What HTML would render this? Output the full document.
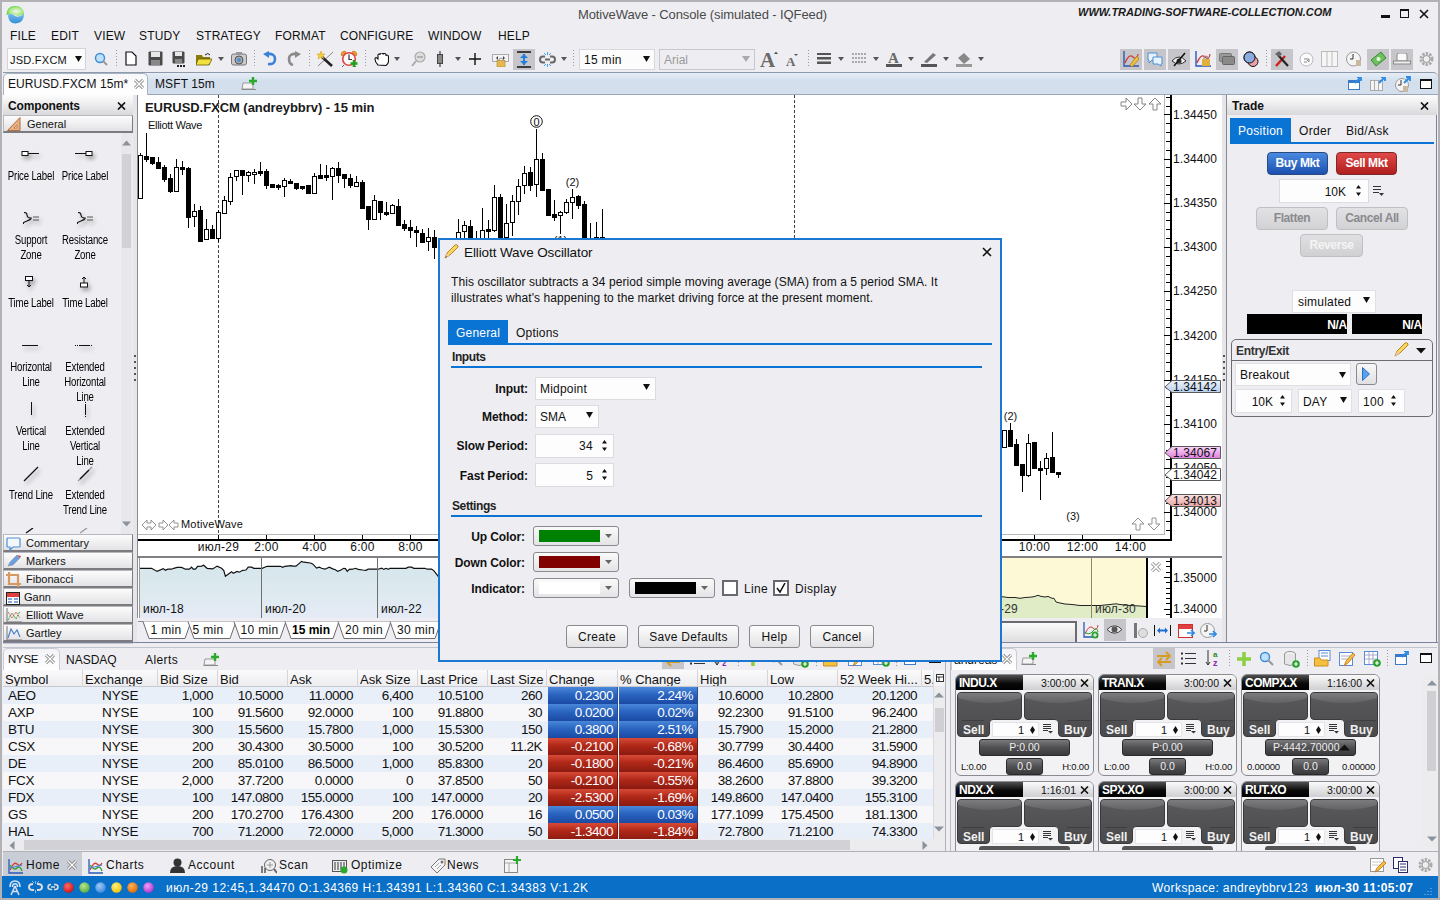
<!DOCTYPE html>
<html><head><meta charset="utf-8"><style>
html,body{margin:0;padding:0}
body{width:1440px;height:900px;overflow:hidden;background:#eeeef2;position:relative;font-family:"Liberation Sans",sans-serif}
.a{position:absolute}
.t{position:absolute;white-space:nowrap;line-height:1;font-family:"Liberation Sans",sans-serif}
</style></head><body>
<div class="a" style="left:7px;top:48px;width:79px;height:22px;background:#fbfbfb;border:1px solid #d4d4d8;box-sizing:border-box"></div>
<div class="t" style="left:10px;top:55px;font-size:11px;color:#111;letter-spacing:0.25px">JSD.FXCM</div>
<svg class="a" style="left:75px;top:56px;" width="7" height="6" viewBox="0 0 7 6"><path d="M0 0H7L3.5 6Z" fill="#111"/></svg>
<svg class="a" style="left:94px;top:52px;" width="14" height="14" viewBox="0 0 14 14"><circle cx="6" cy="6" r="4.5" fill="#bfe0fa" stroke="#3b8ad8" stroke-width="1.4"/><path d="M9 9L13 13" stroke="#999" stroke-width="2"/></svg>
<div class="a" style="left:116px;top:50px;width:1px;height:18px;background:repeating-linear-gradient(#9a9a9a 0 1px,transparent 1px 3px)"></div>
<svg class="a" style="left:125px;top:51px;" width="12" height="15" viewBox="0 0 12 15"><path d="M1 1H7L11 5V14H1Z" fill="#fff" stroke="#111" stroke-width="1.2"/></svg>
<svg class="a" style="left:148px;top:51px;" width="15" height="15" viewBox="0 0 15 15"><rect x="0.5" y="0.5" width="14" height="14" rx="1" fill="#4a4a4a"/><rect x="3" y="1" width="9" height="5" fill="#e8e8e8"/><rect x="3" y="9" width="9" height="5" fill="#888"/></svg>
<svg class="a" style="left:172px;top:51px;" width="15" height="17" viewBox="0 0 15 17"><rect x="0.5" y="0.5" width="12" height="12" rx="1" fill="#4a4a4a"/><rect x="3" y="1" width="7" height="4" fill="#e8e8e8"/><rect x="3" y="8" width="7" height="4" fill="#888"/><rect x="5" y="14" width="2" height="2" fill="#222"/><rect x="8" y="14" width="2" height="2" fill="#222"/><rect x="11" y="14" width="2" height="2" fill="#222"/></svg>
<svg class="a" style="left:196px;top:52px;" width="16" height="14" viewBox="0 0 16 14"><path d="M0 3H6L7 5H14V13H0Z" fill="#8a7a10"/><path d="M2 7H16L13 13H0Z" fill="#f0e040" stroke="#6a5a00" stroke-width=".8"/><path d="M9 3Q12 0 14 3" stroke="#222" fill="none"/></svg>
<svg class="a" style="left:218px;top:57px;" width="6" height="4" viewBox="0 0 6 4"><path d="M0 0H6L3 4Z" fill="#555"/></svg>
<svg class="a" style="left:231px;top:51px;" width="16" height="16" viewBox="0 0 16 16"><rect x="0.5" y="3" width="15" height="11" rx="2" fill="#ccc" stroke="#777"/><rect x="5" y="1" width="6" height="3" fill="#999"/><circle cx="8" cy="9" r="4" fill="#aaa" stroke="#555"/><circle cx="8" cy="9" r="2" fill="#4a90d9"/></svg>
<div class="a" style="left:254px;top:50px;width:1px;height:18px;background:repeating-linear-gradient(#9a9a9a 0 1px,transparent 1px 3px)"></div>
<svg class="a" style="left:263px;top:51px;" width="14" height="15" viewBox="0 0 14 15"><path d="M4 3Q12 2 12 8Q12 14 5 13" stroke="#3b7fd8" stroke-width="2.6" fill="none"/><path d="M0 3L6 0V7Z" fill="#3b7fd8"/></svg>
<svg class="a" style="left:287px;top:51px;" width="14" height="15" viewBox="0 0 14 15"><path d="M10 3Q2 2 2 8Q2 13 6 14" stroke="#8a8a8a" stroke-width="2.6" fill="none"/><path d="M14 3L8 0V7Z" fill="#8a8a8a"/></svg>
<div class="a" style="left:309px;top:50px;width:1px;height:18px;background:repeating-linear-gradient(#9a9a9a 0 1px,transparent 1px 3px)"></div>
<svg class="a" style="left:316px;top:50px;" width="18" height="18" viewBox="0 0 18 18"><path d="M2 16L17 2" stroke="#888" stroke-width="1"/><path d="M6 7L16 16" stroke="#222" stroke-width="2.6"/><path d="M5 1L6 4L9 4L6.5 6L8 9L5 7L2 9L3 6L1 4L4 4Z" fill="#f8d030" stroke="#d09010" stroke-width=".5"/></svg>
<svg class="a" style="left:340px;top:50px;" width="18" height="17" viewBox="0 0 18 17"><path d="M1 5Q1 1 5 1L6 2L2 6Z M17 5Q17 1 13 1L12 2L16 6Z" fill="#f0a030" stroke="#c07010" stroke-width=".6"/><circle cx="9" cy="9" r="6.3" fill="#fafafa" stroke="#e04040" stroke-width="1.6"/><path d="M9 4.5V9.5H12" stroke="#333" stroke-width="1.2" fill="none"/><path d="M4 15L2 17M14 15L16 17" stroke="#666"/><path d="M14 10V17M10.5 13.5H17.5" stroke="#20a020" stroke-width="2.6"/></svg>
<div class="a" style="left:365px;top:50px;width:1px;height:18px;background:repeating-linear-gradient(#9a9a9a 0 1px,transparent 1px 3px)"></div>
<svg class="a" style="left:374px;top:53px;" width="15" height="13" viewBox="0 0 15 13"><path d="M4 12Q1 9 1 6Q1 4 3 5L4 6V2Q4 1 5 1Q6 1 6 2V1Q6 0 7.5 0Q9 0 9 1V1.5Q9 0.5 10.5 0.5Q12 0.5 12 2V3Q12 2 13 2Q14.5 2 14.5 4V8Q14.5 11 12 12.5Z" fill="#fff" stroke="#111" stroke-width="1.1"/></svg>
<svg class="a" style="left:394px;top:57px;" width="6" height="4" viewBox="0 0 6 4"><path d="M0 0H6L3 4Z" fill="#555"/></svg>
<svg class="a" style="left:411px;top:51px;" width="16" height="16" viewBox="0 0 16 16"><circle cx="9" cy="6" r="5" fill="#ddd" stroke="#aaa" stroke-width="1.2"/><path d="M6 6H12" stroke="#888"/><path d="M5 10L1 15" stroke="#aaa" stroke-width="2"/></svg>
<svg class="a" style="left:436px;top:51px;" width="8" height="16" viewBox="0 0 8 16"><path d="M4 0V16" stroke="#444" stroke-width="1.2"/><rect x="1.5" y="3.5" width="5" height="9" fill="#888" stroke="#444"/></svg>
<svg class="a" style="left:455px;top:57px;" width="6" height="4" viewBox="0 0 6 4"><path d="M0 0H6L3 4Z" fill="#555"/></svg>
<svg class="a" style="left:469px;top:53px;" width="12" height="12" viewBox="0 0 12 12"><path d="M6 0V12M0 6H12" stroke="#111" stroke-width="1.4"/></svg>
<svg class="a" style="left:492px;top:54px;" width="17" height="13" viewBox="0 0 17 13"><rect x="0.5" y="0.5" width="16" height="7" fill="#f4f4f4" stroke="#aaa"/><path d="M4 4L6 2V6Z M13 4L11 2V6Z" fill="#444"/><rect x="5" y="6.5" width="8" height="6.5" fill="#e8b850" stroke="#b08020" stroke-width=".6"/><path d="M7 7V5Q9 3 11 5V7" stroke="#999" fill="none"/></svg>
<div class="a" style="left:513px;top:49px;width:22px;height:21px;background:#c6c6ca"></div>
<svg class="a" style="left:517px;top:51px;" width="14" height="17" viewBox="0 0 14 17"><path d="M0 1H14M0 16H14" stroke="#111" stroke-width="1.4"/><path d="M7 3V14" stroke="#1e7fe0" stroke-width="2"/><path d="M3 7L7 3L11 7Z M3 10L7 14L11 10Z" fill="#1e7fe0"/></svg>
<svg class="a" style="left:539px;top:52px;" width="17" height="15" viewBox="0 0 17 15"><path d="M6 4.5H4Q1 4.5 1 7.5Q1 10.5 4 10.5H6M11 4.5H13Q16 4.5 16 7.5Q16 10.5 13 10.5H11M6 7.5H11" stroke="#666" stroke-width="2" fill="none"/><path d="M8.5 0V3M8.5 12V15M5 1L7 3M12 1L10 3M5 14L7 12M12 14L10 12" stroke="#4aa0f0"/></svg>
<svg class="a" style="left:561px;top:57px;" width="6" height="4" viewBox="0 0 6 4"><path d="M0 0H6L3 4Z" fill="#555"/></svg>
<div class="a" style="left:573px;top:50px;width:1px;height:18px;background:repeating-linear-gradient(#9a9a9a 0 1px,transparent 1px 3px)"></div>
<div class="a" style="left:579px;top:49px;width:76px;height:21px;background:#fcfcfc;border:1px solid #d8d8dc;box-sizing:border-box"></div>
<div class="t" style="left:584px;top:54px;font-size:12px;color:#111;letter-spacing:0.3px">15 min</div>
<svg class="a" style="left:643px;top:56px;" width="7" height="6" viewBox="0 0 7 6"><path d="M0 0H7L3.5 6Z" fill="#111"/></svg>
<div class="a" style="left:659px;top:49px;width:96px;height:21px;background:#eeeef2;border:1px solid #c8c8cc;box-sizing:border-box"></div>
<div class="t" style="left:664px;top:54px;font-size:12px;color:#9a9a9a;">Arial</div>
<svg class="a" style="left:742px;top:56px;" width="8" height="6" viewBox="0 0 8 6"><path d="M0 0H8L4 6Z" fill="#aaa"/></svg>
<svg class="a" style="left:760px;top:50px;" width="19" height="18" viewBox="0 0 19 18"><text x="0" y="17" font-family="Liberation Serif" font-weight="bold" font-size="21" fill="#6a6a6a">A</text><path d="M14 4L16 1.5L18 4Z" fill="#555"/></svg>
<svg class="a" style="left:786px;top:53px;" width="13" height="14" viewBox="0 0 13 14"><text x="0" y="13" font-family="Liberation Serif" font-weight="bold" font-size="13" fill="#6a6a6a">A</text><path d="M8 1H12L10 3Z" fill="#555"/></svg>
<div class="a" style="left:808px;top:50px;width:1px;height:18px;background:repeating-linear-gradient(#9a9a9a 0 1px,transparent 1px 3px)"></div>
<svg class="a" style="left:817px;top:53px;" width="15" height="11" viewBox="0 0 15 11"><rect y="0" width="14" height="2" fill="#555"/><rect y="4" width="14" height="2.5" fill="#555"/><rect y="8.5" width="14" height="2.5" fill="#555"/></svg>
<svg class="a" style="left:838px;top:57px;" width="6" height="4" viewBox="0 0 6 4"><path d="M0 0H6L3 4Z" fill="#555"/></svg>
<svg class="a" style="left:852px;top:53px;" width="15" height="11" viewBox="0 0 15 11"><path d="M0 1H14M0 5H14M0 9H14" stroke="#666" stroke-dasharray="2 1"/></svg>
<svg class="a" style="left:873px;top:57px;" width="6" height="4" viewBox="0 0 6 4"><path d="M0 0H6L3 4Z" fill="#555"/></svg>
<svg class="a" style="left:886px;top:50px;" width="17" height="17" viewBox="0 0 17 17"><text x="2" y="13" font-family="Liberation Serif" font-weight="bold" font-size="15" fill="#6a6a6a">A</text><rect x="0" y="14" width="16" height="3" fill="#555"/></svg>
<svg class="a" style="left:908px;top:57px;" width="6" height="4" viewBox="0 0 6 4"><path d="M0 0H6L3 4Z" fill="#555"/></svg>
<svg class="a" style="left:921px;top:51px;" width="17" height="16" viewBox="0 0 17 16"><path d="M3 11L12 2L15 4L6 12Z" fill="#777"/><rect x="0" y="13" width="16" height="3" fill="#555"/></svg>
<svg class="a" style="left:943px;top:57px;" width="6" height="4" viewBox="0 0 6 4"><path d="M0 0H6L3 4Z" fill="#555"/></svg>
<svg class="a" style="left:956px;top:51px;" width="17" height="16" viewBox="0 0 17 16"><path d="M2 7L8 2L14 8L8 13Z" fill="#888"/><rect x="0" y="13" width="16" height="3" fill="#999"/></svg>
<svg class="a" style="left:978px;top:57px;" width="6" height="4" viewBox="0 0 6 4"><path d="M0 0H6L3 4Z" fill="#555"/></svg>
<div class="a" style="left:1120px;top:49px;width:22px;height:21px;background:#c6c6ca"></div>
<div class="a" style="left:1144px;top:49px;width:22px;height:21px;background:#c6c6ca"></div>
<div class="a" style="left:1168px;top:49px;width:22px;height:21px;background:#c6c6ca"></div>
<div class="a" style="left:1216px;top:49px;width:22px;height:21px;background:#c6c6ca"></div>
<div class="a" style="left:1271px;top:49px;width:22px;height:21px;background:#c6c6ca"></div>
<div class="a" style="left:1367px;top:49px;width:22px;height:21px;background:#c6c6ca"></div>
<div class="a" style="left:1391px;top:49px;width:22px;height:21px;background:#c6c6ca"></div>
<svg class="a" style="left:1123px;top:51px;" width="16" height="16" viewBox="0 0 16 16"><path d="M1 0V15H16" stroke="#2a5ab8" stroke-width="1.4" fill="none"/><path d="M2 12Q6 2 10 6T15 3" stroke="#d04040" fill="none" stroke-width="1.3"/><path d="M7 14L14 5L16 8L9 16Z" fill="#f0c040" stroke="#b07a10" stroke-width=".8"/></svg>
<svg class="a" style="left:1147px;top:51px;" width="16" height="16" viewBox="0 0 16 16"><path d="M1 2H10V9H5L2 12V9H1Z" fill="#e8f2fc" stroke="#4a90d8"/><path d="M6 6H15V13H14V15L11 13H6Z" fill="#e8f2fc" stroke="#4a90d8"/></svg>
<svg class="a" style="left:1171px;top:51px;" width="16" height="16" viewBox="0 0 16 16"><path d="M1 10Q8 2 15 10Q8 16 1 10Z" fill="#eee" stroke="#333"/><circle cx="8" cy="10" r="2.5" fill="#333"/><path d="M3 15L14 2" stroke="#111" stroke-width="1.5"/></svg>
<svg class="a" style="left:1195px;top:51px;" width="16" height="16" viewBox="0 0 16 16"><path d="M1 0V15H16" stroke="#2a5ab8" stroke-width="1.4" fill="none"/><path d="M2 12Q6 2 10 6T15 3" stroke="#d04040" fill="none" stroke-width="1.3"/><rect x="7" y="8" width="8" height="7" fill="#e0b040"/><path d="M9 8V6Q11 4 13 6V8" stroke="#888" fill="none"/></svg>
<svg class="a" style="left:1219px;top:53px;" width="16" height="12" viewBox="0 0 16 12"><rect x="0.5" y="0.5" width="12" height="8" rx="1" fill="#999" stroke="#777"/><rect x="3.5" y="3.5" width="12" height="8" rx="1" fill="#8a8a8a" stroke="#666"/></svg>
<svg class="a" style="left:1243px;top:51px;" width="16" height="16" viewBox="0 0 16 16"><circle cx="6.5" cy="6.5" r="5.5" fill="#8aaae0" stroke="#111"/><circle cx="10" cy="10.5" r="5" fill="#f0a0a8" stroke="#111"/><circle cx="6.5" cy="6.5" r="5.5" fill="#8aaae0" stroke="#111"/></svg>
<div class="a" style="left:1266px;top:50px;width:1px;height:18px;background:repeating-linear-gradient(#9a9a9a 0 1px,transparent 1px 3px)"></div>
<svg class="a" style="left:1274px;top:51px;" width="16" height="16" viewBox="0 0 16 16"><path d="M2 15L11 5" stroke="#d02020" stroke-width="2.5"/><path d="M14 15L4 4" stroke="#222" stroke-width="2.2"/><path d="M1 3L5 0L8 3L5 6Z" fill="#666"/></svg>
<svg class="a" style="left:1299px;top:52px;" width="15" height="15" viewBox="0 0 15 15"><circle cx="7.5" cy="7.5" r="6.5" fill="#fbfbfb" stroke="#bbb"/><path d="M5 7H10V10M10 10L8 8M5 10H8" stroke="#888" fill="none"/></svg>
<svg class="a" style="left:1321px;top:51px;" width="17" height="16" viewBox="0 0 17 16"><rect x="0.5" y="0.5" width="16" height="15" fill="#f6f6f6" stroke="#bbb"/><path d="M6 1V15M11 1V15" stroke="#bbb"/></svg>
<svg class="a" style="left:1346px;top:51px;" width="17" height="16" viewBox="0 0 17 16"><circle cx="7.5" cy="8" r="7" fill="#f4f4f4" stroke="#999"/><path d="M7 3V8H4" stroke="#333" fill="none"/><path d="M10 9h5v6h-5z" fill="#c8b8a0"/></svg>
<svg class="a" style="left:1370px;top:51px;" width="17" height="16" viewBox="0 0 17 16"><path d="M1 9L11 1L16 7L6 15Z" fill="#6cc060" stroke="#3a8a30"/><circle cx="8.5" cy="8" r="2" fill="#e8f8e0"/></svg>
<svg class="a" style="left:1393px;top:53px;" width="18" height="12" viewBox="0 0 18 12"><path d="M4 8V2Q4 0 6 0H12Q14 0 14 2V8Z" fill="#fafafa" stroke="#888"/><rect x="0.5" y="8" width="17" height="3" fill="#eee" stroke="#888"/></svg>
<svg class="a" style="left:1419px;top:51px;" width="15" height="16" viewBox="0 0 15 16"><circle cx="7.5" cy="8" r="5.5" fill="none" stroke="#aaa" stroke-width="3" stroke-dasharray="2.3 1.2"/><circle cx="7.5" cy="8" r="3.5" fill="#eee" stroke="#999"/></svg>
<div class="a" style="left:3px;top:72px;width:1435px;height:23px;background:linear-gradient(#e6edf6,#d3dfed 40%,#d3dfed);border-top:1px solid #8d9aab;border-bottom:1px solid #9aa6b6;box-sizing:border-box;border-top-right-radius:5px"></div>
<div class="a" style="left:3px;top:73px;width:145px;height:22px;background:linear-gradient(#f8f8fa,#fff);border:1px solid #a9b4c2;border-bottom:none;border-radius:5px 5px 0 0;box-sizing:border-box"></div>
<div class="t" style="left:8px;top:78px;font-size:12px;color:#111;letter-spacing:0.05px">EURUSD.FXCM 15m*</div>
<svg class="a" style="left:134px;top:79px;" width="10" height="10" viewBox="0 0 10 10"><path d="M1 1L9 9M9 1L1 9" stroke="#777" stroke-width="3"/><path d="M1 1L9 9M9 1L1 9" stroke="#fff" stroke-width="1.4"/></svg>
<div class="t" style="left:155px;top:78px;font-size:12px;color:#111;letter-spacing:0.1px">MSFT 15m</div>
<svg class="a" style="left:241px;top:77px;" width="17" height="13" viewBox="0 0 17 13"><path d="M1 12L2 6H12V12Z" fill="#f4f4f4" stroke="#999"/><path d="M0.5 12.5H15" stroke="#888"/><path d="M12 0V8M8 4H16" stroke="#2aaa2a" stroke-width="2.4"/></svg>
<svg class="a" style="left:1348px;top:77px;" width="14" height="13" viewBox="0 0 14 13"><rect x="0.5" y="3.5" width="11" height="9" fill="#fff" stroke="#3a7ac8"/><rect x="0.5" y="3.5" width="11" height="2.5" fill="#3a7ac8"/><path d="M7 6L13 0M9 0H13V4" stroke="#2a8ae8" stroke-width="1.8" fill="none"/></svg>
<svg class="a" style="left:1370px;top:77px;" width="16" height="14" viewBox="0 0 16 14"><rect x="0.5" y="3.5" width="12" height="10" fill="#f4f4f4" stroke="#aaa"/><path d="M4.5 4V13M8.5 4V13" stroke="#aaa"/><path d="M9 6L15 0M11 0H15V4" stroke="#2a8ae8" stroke-width="1.8" fill="none"/></svg>
<svg class="a" style="left:1395px;top:76px;" width="16" height="16" viewBox="0 0 16 16"><circle cx="7" cy="9" r="6.5" fill="#f4f4f4" stroke="#999"/><path d="M6 4V9H3" stroke="#333" fill="none"/><path d="M8 10h5v6h-5z" fill="#c8b8a0"/><path d="M9 7L15 1M11 1H15V5" stroke="#2a8ae8" stroke-width="1.8" fill="none"/></svg>
<div class="a" style="left:1420px;top:79px;width:12px;height:10px;border:1px solid #111;border-top-width:2px;box-sizing:border-box;background:#fff"></div>
<div class="a" style="left:3px;top:95px;width:130px;height:20px;background:linear-gradient(#fdfdfd,#d9d9dc);"></div>
<div class="t" style="left:8px;top:100px;font-size:12px;color:#111;font-weight:bold;letter-spacing:-0.15px">Components</div>
<svg class="a" style="left:117px;top:102px;" width="9" height="8" viewBox="0 0 9 8"><path d="M1 0.5L8 7.5M8 0.5L1 7.5" stroke="#111" stroke-width="1.7"/></svg>
<div class="a" style="left:3px;top:115px;width:130px;height:18px;background:linear-gradient(#fcfcfc,#e3e3e6);border:1px solid #b8b8bc;border-right:1px solid #7c7c80;border-bottom:2px solid #7c7c80;box-sizing:border-box"></div><svg class="a" style="left:7px;top:117px;" width="14" height="14" viewBox="0 0 14 14"><path d="M13 0.5V13.5H0.5Z" fill="#e8b080" stroke="#b07040"/><path d="M10 8V11H7Z" fill="#fbe8d8" stroke="#b07040" stroke-width=".7"/></svg><div class="t" style="left:27px;top:119px;font-size:11px;color:#111;">General</div>
<div class="a" style="left:121px;top:133px;width:11px;height:401px;background:#e8e8ec"></div>
<svg class="a" style="left:122px;top:140px;" width="9" height="6" viewBox="0 0 9 6"><path d="M0 5.5L4.5 0.5L9 5.5Z" fill="#8a929c"/></svg>
<div class="a" style="left:122px;top:154px;width:9px;height:94px;background:#d2d2d6"></div>
<svg class="a" style="left:122px;top:521px;" width="9" height="6" viewBox="0 0 9 6"><path d="M0 0.5L4.5 5.5L9 0.5Z" fill="#8a929c"/></svg>
<div class="t" style="left:-29px;width:120px;text-align:center;top:170px;font-size:12px;transform:scaleX(0.8);transform-origin:60px 0;letter-spacing:-0.2px">Price Label</div>
<div class="t" style="left:25px;width:120px;text-align:center;top:170px;font-size:12px;transform:scaleX(0.8);transform-origin:60px 0;letter-spacing:-0.2px">Price Label</div>
<div class="t" style="left:-29px;width:120px;text-align:center;top:234px;font-size:12px;transform:scaleX(0.8);transform-origin:60px 0;letter-spacing:-0.2px">Support</div>
<div class="t" style="left:-29px;width:120px;text-align:center;top:249px;font-size:12px;transform:scaleX(0.8);transform-origin:60px 0;letter-spacing:-0.2px">Zone</div>
<div class="t" style="left:25px;width:120px;text-align:center;top:234px;font-size:12px;transform:scaleX(0.8);transform-origin:60px 0;letter-spacing:-0.2px">Resistance</div>
<div class="t" style="left:25px;width:120px;text-align:center;top:249px;font-size:12px;transform:scaleX(0.8);transform-origin:60px 0;letter-spacing:-0.2px">Zone</div>
<div class="t" style="left:-29px;width:120px;text-align:center;top:297px;font-size:12px;transform:scaleX(0.8);transform-origin:60px 0;letter-spacing:-0.2px">Time Label</div>
<div class="t" style="left:25px;width:120px;text-align:center;top:297px;font-size:12px;transform:scaleX(0.8);transform-origin:60px 0;letter-spacing:-0.2px">Time Label</div>
<div class="t" style="left:-29px;width:120px;text-align:center;top:361px;font-size:12px;transform:scaleX(0.8);transform-origin:60px 0;letter-spacing:-0.2px">Horizontal</div>
<div class="t" style="left:-29px;width:120px;text-align:center;top:376px;font-size:12px;transform:scaleX(0.8);transform-origin:60px 0;letter-spacing:-0.2px">Line</div>
<div class="t" style="left:25px;width:120px;text-align:center;top:361px;font-size:12px;transform:scaleX(0.8);transform-origin:60px 0;letter-spacing:-0.2px">Extended</div>
<div class="t" style="left:25px;width:120px;text-align:center;top:376px;font-size:12px;transform:scaleX(0.8);transform-origin:60px 0;letter-spacing:-0.2px">Horizontal</div>
<div class="t" style="left:25px;width:120px;text-align:center;top:391px;font-size:12px;transform:scaleX(0.8);transform-origin:60px 0;letter-spacing:-0.2px">Line</div>
<div class="t" style="left:-29px;width:120px;text-align:center;top:425px;font-size:12px;transform:scaleX(0.8);transform-origin:60px 0;letter-spacing:-0.2px">Vertical</div>
<div class="t" style="left:-29px;width:120px;text-align:center;top:440px;font-size:12px;transform:scaleX(0.8);transform-origin:60px 0;letter-spacing:-0.2px">Line</div>
<div class="t" style="left:25px;width:120px;text-align:center;top:425px;font-size:12px;transform:scaleX(0.8);transform-origin:60px 0;letter-spacing:-0.2px">Extended</div>
<div class="t" style="left:25px;width:120px;text-align:center;top:440px;font-size:12px;transform:scaleX(0.8);transform-origin:60px 0;letter-spacing:-0.2px">Vertical</div>
<div class="t" style="left:25px;width:120px;text-align:center;top:455px;font-size:12px;transform:scaleX(0.8);transform-origin:60px 0;letter-spacing:-0.2px">Line</div>
<div class="t" style="left:-29px;width:120px;text-align:center;top:489px;font-size:12px;transform:scaleX(0.8);transform-origin:60px 0;letter-spacing:-0.2px">Trend Line</div>
<div class="t" style="left:25px;width:120px;text-align:center;top:489px;font-size:12px;transform:scaleX(0.8);transform-origin:60px 0;letter-spacing:-0.2px">Extended</div>
<div class="t" style="left:25px;width:120px;text-align:center;top:504px;font-size:12px;transform:scaleX(0.8);transform-origin:60px 0;letter-spacing:-0.2px">Trend Line</div>
<svg class="a" style="left:21px;top:150px;filter:drop-shadow(2px 3px 2px rgba(0,0,0,.35))" width="19" height="8" viewBox="0 0 19 8"><rect x="1" y="1.5" width="6" height="4" fill="#fff" stroke="#111"/><path d="M7 3.5H18" stroke="#111"/></svg>
<svg class="a" style="left:75px;top:150px;filter:drop-shadow(2px 3px 2px rgba(0,0,0,.35))" width="19" height="8" viewBox="0 0 19 8"><rect x="11" y="1.5" width="6" height="4" fill="#fff" stroke="#111"/><path d="M0 3.5H11" stroke="#111"/></svg>
<svg class="a" style="left:23px;top:212px;filter:drop-shadow(2px 3px 2px rgba(0,0,0,.35))" width="19" height="12" viewBox="0 0 19 12"><path d="M1 0.5Q4 0.5 4 3T7 6T4 9T1 11.5" stroke="#111" fill="none" stroke-width="1.1"/><path d="M6 6H9M10 5H16M10 8H16" stroke="#555"/></svg>
<svg class="a" style="left:77px;top:212px;filter:drop-shadow(2px 3px 2px rgba(0,0,0,.35))" width="19" height="12" viewBox="0 0 19 12"><path d="M1 0.5Q4 0.5 4 3T7 6T4 9T1 11.5" stroke="#111" fill="none" stroke-width="1.1"/><path d="M6 6H9M10 5H16M10 8H16" stroke="#555"/></svg>
<svg class="a" style="left:25px;top:276px;filter:drop-shadow(2px 3px 2px rgba(0,0,0,.35))" width="9" height="12" viewBox="0 0 9 12"><rect x="0.5" y="0.5" width="7" height="4" fill="#fff" stroke="#111"/><path d="M4 5V11M2 9L4 11L6 9" stroke="#111" fill="none"/></svg>
<svg class="a" style="left:80px;top:276px;filter:drop-shadow(2px 3px 2px rgba(0,0,0,.35))" width="9" height="12" viewBox="0 0 9 12"><rect x="0.5" y="7" width="7" height="4" fill="#fff" stroke="#111"/><path d="M4 1V7M2 3L4 1L6 3" stroke="#111" fill="none"/></svg>
<svg class="a" style="left:22px;top:344px;filter:drop-shadow(2px 3px 2px rgba(0,0,0,.35))" width="17" height="5" viewBox="0 0 17 5"><path d="M0 1.5H16" stroke="#111"/></svg>
<svg class="a" style="left:75px;top:344px;filter:drop-shadow(2px 3px 2px rgba(0,0,0,.35))" width="19" height="5" viewBox="0 0 19 5"><path d="M0 1.5H18" stroke="#111" stroke-dasharray="1 1"/><path d="M4 1.5H14" stroke="#111"/></svg>
<svg class="a" style="left:30px;top:402px;filter:drop-shadow(2px 3px 2px rgba(0,0,0,.35))" width="4" height="14" viewBox="0 0 4 14"><path d="M1.5 0V13" stroke="#111"/></svg>
<svg class="a" style="left:84px;top:402px;filter:drop-shadow(2px 3px 2px rgba(0,0,0,.35))" width="4" height="16" viewBox="0 0 4 16"><path d="M1.5 0V15" stroke="#111" stroke-dasharray="1 1"/><path d="M1.5 3V12" stroke="#111"/></svg>
<svg class="a" style="left:23px;top:466px;filter:drop-shadow(2px 3px 2px rgba(0,0,0,.35))" width="16" height="16" viewBox="0 0 16 16"><path d="M1 15L15 1" stroke="#111" stroke-width="1.3"/></svg>
<svg class="a" style="left:77px;top:466px;filter:drop-shadow(2px 3px 2px rgba(0,0,0,.35))" width="16" height="16" viewBox="0 0 16 16"><path d="M1 15L15 1" stroke="#999" stroke-width="1.3"/><path d="M3 13L12 4" stroke="#111" stroke-width="1.3"/></svg>
<svg class="a" style="left:25px;top:528px;" width="10" height="6" viewBox="0 0 10 6"><path d="M1 5L8 0" stroke="#111" stroke-width="1.3"/></svg>
<svg class="a" style="left:79px;top:528px;" width="10" height="6" viewBox="0 0 10 6"><path d="M1 5L8 0" stroke="#999" stroke-width="1.3"/></svg>
<div class="a" style="left:3px;top:534px;width:130px;height:18px;background:linear-gradient(#fcfcfc,#e3e3e6);border:1px solid #b8b8bc;border-right:1px solid #7c7c80;border-bottom:2px solid #7c7c80;box-sizing:border-box"></div><svg class="a" style="left:6px;top:537px;" width="15" height="14" viewBox="0 0 15 14"><path d="M2 1H13Q14 1 14 2V9Q14 10 13 10H7L4 13V10H2Q1 10 1 9V2Q1 1 2 1Z" fill="#f4f8fc" stroke="#4a90d8" stroke-width="1.2"/></svg><div class="t" style="left:26px;top:538px;font-size:11px;color:#111;">Commentary</div>
<div class="a" style="left:3px;top:552px;width:130px;height:18px;background:linear-gradient(#fcfcfc,#e3e3e6);border:1px solid #b8b8bc;border-right:1px solid #7c7c80;border-bottom:2px solid #7c7c80;box-sizing:border-box"></div><svg class="a" style="left:7px;top:555px;" width="14" height="12" viewBox="0 0 14 12"><path d="M1 11L3 7L10 0L13 3L6 10Z" fill="#6aa0e0" stroke="#888" stroke-width=".5"/><path d="M10 0L13 3L14 1Z" fill="#e04040"/></svg><div class="t" style="left:26px;top:556px;font-size:11px;color:#111;">Markers</div>
<div class="a" style="left:3px;top:570px;width:130px;height:18px;background:linear-gradient(#fcfcfc,#e3e3e6);border:1px solid #b8b8bc;border-right:1px solid #7c7c80;border-bottom:2px solid #7c7c80;box-sizing:border-box"></div><svg class="a" style="left:6px;top:572px;" width="16" height="15" viewBox="0 0 16 15"><path d="M3 0V12H15M0 3H12V15" stroke="#d89860" stroke-width="2.2" fill="none"/></svg><div class="t" style="left:26px;top:574px;font-size:11px;color:#111;">Fibonacci</div>
<div class="a" style="left:3px;top:588px;width:130px;height:18px;background:linear-gradient(#fcfcfc,#e3e3e6);border:1px solid #b8b8bc;border-right:1px solid #7c7c80;border-bottom:2px solid #7c7c80;box-sizing:border-box"></div><svg class="a" style="left:6px;top:590px;" width="14" height="15" viewBox="0 0 14 15"><rect x="0.5" y="2.5" width="13" height="12" fill="#fff" stroke="#222"/><rect x="1" y="3" width="12" height="4" fill="#e04040"/><path d="M2 9H6M8 9H12M2 12H6M8 12H12" stroke="#5a8ad8" stroke-width="1.5"/></svg><div class="t" style="left:24px;top:592px;font-size:11px;color:#111;">Gann</div>
<div class="a" style="left:3px;top:606px;width:130px;height:18px;background:linear-gradient(#fcfcfc,#e3e3e6);border:1px solid #b8b8bc;border-right:1px solid #7c7c80;border-bottom:2px solid #7c7c80;box-sizing:border-box"></div><svg class="a" style="left:6px;top:608px;" width="16" height="15" viewBox="0 0 16 15"><path d="M1 0V14H16" stroke="#777" fill="none"/><path d="M2 12L6 5L10 11L14 3" stroke="#2aaa2a" fill="none" stroke-dasharray="2 1"/><path d="M2 4L6 10L10 4L14 10" stroke="#e05050" fill="none" stroke-dasharray="2 1"/></svg><div class="t" style="left:26px;top:610px;font-size:11px;color:#111;">Elliott Wave</div>
<div class="a" style="left:3px;top:624px;width:130px;height:18px;background:linear-gradient(#fcfcfc,#e3e3e6);border:1px solid #b8b8bc;border-right:1px solid #7c7c80;border-bottom:2px solid #7c7c80;box-sizing:border-box"></div><svg class="a" style="left:6px;top:626px;" width="16" height="15" viewBox="0 0 16 15"><path d="M1 0V14H16" stroke="#777" fill="none"/><path d="M2 12L5 3L8 8L11 4L14 11" stroke="#4a80c8" fill="none" stroke-width="1.2"/></svg><div class="t" style="left:26px;top:628px;font-size:11px;color:#111;">Gartley</div>
<div class="a" style="left:3px;top:642px;width:130px;height:2px;background:#c8c8cc"></div>
<div class="a" style="left:133px;top:95px;width:4px;height:548px;background:#e6e6ea"></div>
<div class="a" style="left:137px;top:95px;width:1px;height:548px;background:#8a8a90"></div>
<div class="a" style="left:134px;top:355px;width:2px;height:2px;background:#555"></div>
<div class="a" style="left:134px;top:361px;width:2px;height:2px;background:#555"></div>
<div class="a" style="left:134px;top:367px;width:2px;height:2px;background:#555"></div>
<div class="a" style="left:134px;top:373px;width:2px;height:2px;background:#555"></div>
<div class="a" style="left:134px;top:379px;width:2px;height:2px;background:#555"></div>
<svg class="a" style="left:0;top:0" width="1440" height="900" viewBox="0 0 1440 900" shape-rendering="crispEdges">
<rect x="138" y="95" width="1084" height="462" fill="#fff"/>
<path d="M218.5 95V535" stroke="#444" stroke-dasharray="3 2"/>
<path d="M794.5 95V535" stroke="#444" stroke-dasharray="3 2"/>
<path d="M140.5 153V198" stroke="#000"/>
<rect x="138.5" y="155.5" width="4" height="43" fill="#fff" stroke="#000"/>
<path d="M146.5 133V162" stroke="#000"/>
<rect x="144" y="156" width="5" height="4" fill="#000"/>
<path d="M152.5 157V165" stroke="#000"/>
<rect x="150" y="157" width="5" height="7" fill="#000"/>
<path d="M158.5 157V169" stroke="#000"/>
<rect x="156" y="162" width="5" height="7" fill="#000"/>
<path d="M164.5 165V182" stroke="#000"/>
<rect x="162" y="167" width="5" height="13" fill="#000"/>
<path d="M170.5 174V193" stroke="#000"/>
<rect x="168" y="178" width="5" height="14" fill="#000"/>
<path d="M176.5 159V191" stroke="#000"/>
<rect x="174.5" y="167.5" width="4" height="24" fill="#fff" stroke="#000"/>
<path d="M182.5 161V175" stroke="#000"/>
<rect x="180" y="167" width="5" height="3" fill="#000"/>
<path d="M188.5 167V228" stroke="#000"/>
<rect x="186" y="168" width="5" height="50" fill="#000"/>
<path d="M194.5 204V227" stroke="#000"/>
<rect x="192.5" y="211.5" width="4" height="5" fill="#fff" stroke="#000"/>
<path d="M200.5 206V242" stroke="#000"/>
<rect x="198" y="210" width="5" height="32" fill="#000"/>
<path d="M206.5 219V239" stroke="#000"/>
<rect x="204.5" y="229.5" width="4" height="10" fill="#fff" stroke="#000"/>
<path d="M212.5 225V239" stroke="#000"/>
<rect x="210" y="229" width="5" height="10" fill="#000"/>
<path d="M218.5 210V242" stroke="#000"/>
<rect x="216.5" y="212.5" width="4" height="26" fill="#fff" stroke="#000"/>
<path d="M224.5 196V214" stroke="#000"/>
<rect x="222.5" y="200.5" width="4" height="13" fill="#fff" stroke="#000"/>
<path d="M230.5 173V205" stroke="#000"/>
<rect x="228.5" y="177.5" width="4" height="24" fill="#fff" stroke="#000"/>
<path d="M236.5 170V181" stroke="#000"/>
<rect x="234.5" y="170.5" width="4" height="6" fill="#fff" stroke="#000"/>
<path d="M242.5 170V195" stroke="#000"/>
<rect x="240" y="170" width="5" height="6" fill="#000"/>
<path d="M248.5 171V182" stroke="#000"/>
<rect x="246.5" y="172.5" width="4" height="3" fill="#fff" stroke="#000"/>
<path d="M254.5 169V184" stroke="#000"/>
<rect x="252.5" y="172.5" width="4" height="2" fill="#fff" stroke="#000"/>
<path d="M260.5 162V176" stroke="#000"/>
<rect x="258" y="171" width="5" height="3" fill="#000"/>
<path d="M266.5 169V189" stroke="#000"/>
<rect x="264" y="171" width="5" height="15" fill="#000"/>
<path d="M272.5 184V188" stroke="#000"/>
<rect x="270" y="184" width="5" height="4" fill="#000"/>
<path d="M278.5 184V190" stroke="#000"/>
<rect x="276" y="185" width="5" height="3" fill="#000"/>
<path d="M284.5 178V197" stroke="#000"/>
<rect x="282.5" y="180.5" width="4" height="6" fill="#fff" stroke="#000"/>
<path d="M290.5 179V183" stroke="#000"/>
<rect x="288" y="181" width="5" height="3" fill="#000"/>
<path d="M296.5 183V190" stroke="#000"/>
<rect x="294" y="183" width="5" height="6" fill="#000"/>
<path d="M302.5 186V190" stroke="#000"/>
<rect x="300" y="186" width="5" height="3" fill="#000"/>
<path d="M308.5 185V193" stroke="#000"/>
<rect x="306" y="185" width="5" height="9" fill="#000"/>
<path d="M314.5 173V194" stroke="#000"/>
<rect x="312.5" y="176.5" width="4" height="17" fill="#fff" stroke="#000"/>
<path d="M320.5 164V179" stroke="#000"/>
<rect x="318" y="175" width="5" height="4" fill="#000"/>
<path d="M326.5 165V181" stroke="#000"/>
<rect x="324" y="175" width="5" height="3" fill="#000"/>
<path d="M332.5 167V200" stroke="#000"/>
<rect x="330.5" y="168.5" width="4" height="8" fill="#fff" stroke="#000"/>
<path d="M338.5 162V183" stroke="#000"/>
<rect x="336" y="168" width="5" height="8" fill="#000"/>
<path d="M344.5 174V188" stroke="#000"/>
<rect x="342" y="174" width="5" height="5" fill="#000"/>
<path d="M350.5 174V188" stroke="#000"/>
<rect x="348" y="178" width="5" height="8" fill="#000"/>
<path d="M356.5 176V187" stroke="#000"/>
<rect x="354.5" y="182.5" width="4" height="4" fill="#fff" stroke="#000"/>
<path d="M362.5 180V209" stroke="#000"/>
<rect x="360" y="182" width="5" height="27" fill="#000"/>
<path d="M368.5 206V230" stroke="#000"/>
<rect x="366" y="206" width="5" height="14" fill="#000"/>
<path d="M374.5 195V219" stroke="#000"/>
<rect x="372.5" y="200.5" width="4" height="19" fill="#fff" stroke="#000"/>
<path d="M380.5 201V220" stroke="#000"/>
<rect x="378" y="201" width="5" height="12" fill="#000"/>
<path d="M386.5 202V216" stroke="#000"/>
<rect x="384" y="212" width="5" height="3" fill="#000"/>
<path d="M392.5 204V213" stroke="#000"/>
<rect x="390.5" y="205.5" width="4" height="8" fill="#fff" stroke="#000"/>
<path d="M398.5 199V225" stroke="#000"/>
<rect x="396" y="206" width="5" height="20" fill="#000"/>
<path d="M404.5 220V231" stroke="#000"/>
<rect x="402" y="224" width="5" height="5" fill="#000"/>
<path d="M410.5 220V238" stroke="#000"/>
<rect x="408" y="227" width="5" height="4" fill="#000"/>
<path d="M416.5 226V247" stroke="#000"/>
<rect x="414" y="230" width="5" height="3" fill="#000"/>
<path d="M422.5 229V243" stroke="#000"/>
<rect x="420" y="233" width="5" height="10" fill="#000"/>
<path d="M428.5 228V251" stroke="#000"/>
<rect x="426.5" y="237.5" width="4" height="4" fill="#fff" stroke="#000"/>
<path d="M434.5 230V259" stroke="#000"/>
<rect x="432" y="237" width="5" height="11" fill="#000"/>
<path d="M458.5 219V255" stroke="#000"/>
<rect x="456.5" y="232.5" width="4" height="18" fill="#fff" stroke="#000"/>
<path d="M464.5 221V240" stroke="#000"/>
<rect x="462.5" y="225.5" width="4" height="6" fill="#fff" stroke="#000"/>
<path d="M470.5 220V250" stroke="#000"/>
<rect x="468" y="226" width="5" height="20" fill="#000"/>
<path d="M476.5 231V250" stroke="#000"/>
<rect x="474" y="240" width="5" height="6" fill="#000"/>
<path d="M482.5 208V250" stroke="#000"/>
<rect x="480.5" y="230.5" width="4" height="15" fill="#fff" stroke="#000"/>
<path d="M488.5 220V240" stroke="#000"/>
<rect x="486" y="229" width="5" height="3" fill="#000"/>
<path d="M494.5 185V232" stroke="#000"/>
<rect x="492.5" y="197.5" width="4" height="33" fill="#fff" stroke="#000"/>
<path d="M500.5 194V238" stroke="#000"/>
<rect x="498" y="197" width="5" height="41" fill="#000"/>
<path d="M506.5 204V240" stroke="#000"/>
<rect x="504.5" y="223.5" width="4" height="14" fill="#fff" stroke="#000"/>
<path d="M512.5 195V236" stroke="#000"/>
<rect x="510.5" y="201.5" width="4" height="21" fill="#fff" stroke="#000"/>
<path d="M518.5 179V215" stroke="#000"/>
<rect x="516.5" y="186.5" width="4" height="15" fill="#fff" stroke="#000"/>
<path d="M524.5 166V194" stroke="#000"/>
<rect x="522.5" y="173.5" width="4" height="12" fill="#fff" stroke="#000"/>
<path d="M530.5 167V191" stroke="#000"/>
<rect x="528" y="172" width="5" height="14" fill="#000"/>
<path d="M536.5 129V197" stroke="#000"/>
<rect x="534.5" y="159.5" width="4" height="25" fill="#fff" stroke="#000"/>
<path d="M542.5 153V191" stroke="#000"/>
<rect x="540" y="159" width="5" height="32" fill="#000"/>
<path d="M548.5 189V216" stroke="#000"/>
<rect x="546" y="189" width="5" height="27" fill="#000"/>
<path d="M554.5 200V221" stroke="#000"/>
<rect x="552" y="214" width="5" height="4" fill="#000"/>
<path d="M560.5 211V234" stroke="#000"/>
<rect x="558.5" y="212.5" width="4" height="3" fill="#fff" stroke="#000"/>
<path d="M566.5 199V214" stroke="#000"/>
<rect x="564.5" y="202.5" width="4" height="10" fill="#fff" stroke="#000"/>
<path d="M572.5 189V219" stroke="#000"/>
<rect x="570.5" y="197.5" width="4" height="5" fill="#fff" stroke="#000"/>
<path d="M578.5 195V209" stroke="#000"/>
<rect x="576" y="196" width="5" height="10" fill="#000"/>
<path d="M584.5 201V250" stroke="#000"/>
<rect x="582" y="204" width="5" height="42" fill="#000"/>
<path d="M590.5 223V250" stroke="#000"/>
<rect x="588" y="240" width="5" height="6" fill="#000"/>
<path d="M596.5 222V250" stroke="#000"/>
<rect x="594" y="237" width="5" height="4" fill="#000"/>
<path d="M602.5 209V250" stroke="#000"/>
<rect x="600" y="237" width="5" height="4" fill="#000"/>
<path d="M1004.5 430V448" stroke="#000"/>
<rect x="1002.5" y="430.5" width="4" height="17" fill="#fff" stroke="#000"/>
<path d="M1010.5 423V446" stroke="#000"/>
<rect x="1008" y="430" width="5" height="17" fill="#000"/>
<path d="M1016.5 439V466" stroke="#000"/>
<rect x="1014" y="444" width="5" height="22" fill="#000"/>
<path d="M1022.5 464V492" stroke="#000"/>
<rect x="1020" y="464" width="5" height="12" fill="#000"/>
<path d="M1028.5 434V477" stroke="#000"/>
<rect x="1026.5" y="443.5" width="4" height="32" fill="#fff" stroke="#000"/>
<path d="M1034.5 442V468" stroke="#000"/>
<rect x="1032" y="442" width="5" height="27" fill="#000"/>
<path d="M1040.5 461V500" stroke="#000"/>
<rect x="1038" y="468" width="5" height="3" fill="#000"/>
<path d="M1046.5 453V475" stroke="#000"/>
<rect x="1044.5" y="458.5" width="4" height="10" fill="#fff" stroke="#000"/>
<path d="M1052.5 432V472" stroke="#000"/>
<rect x="1050" y="457" width="5" height="16" fill="#000"/>
<path d="M1058.5 472V478" stroke="#000"/>
<rect x="1056" y="472" width="5" height="3" fill="#000"/>
<path d="M1164.5 95V535" stroke="#b8b8b8"/>
<path d="M138 534.5H1165" stroke="#b8b8b8"/>
<rect x="1170" y="95" width="2" height="446" fill="#000"/>
<rect x="138" y="539" width="1034" height="2" fill="#000"/>
<path d="M1166 97.5H1170" stroke="#000"/>
<path d="M1166 106.5H1170" stroke="#000"/>
<path d="M1164 114.5H1170" stroke="#000"/>
<path d="M1166 123.5H1170" stroke="#000"/>
<path d="M1166 132.5H1170" stroke="#000"/>
<path d="M1166 141.5H1170" stroke="#000"/>
<path d="M1166 150.5H1170" stroke="#000"/>
<path d="M1164 159.5H1170" stroke="#000"/>
<path d="M1166 167.5H1170" stroke="#000"/>
<path d="M1166 176.5H1170" stroke="#000"/>
<path d="M1166 185.5H1170" stroke="#000"/>
<path d="M1166 194.5H1170" stroke="#000"/>
<path d="M1164 203.5H1170" stroke="#000"/>
<path d="M1166 212.5H1170" stroke="#000"/>
<path d="M1166 220.5H1170" stroke="#000"/>
<path d="M1166 229.5H1170" stroke="#000"/>
<path d="M1166 238.5H1170" stroke="#000"/>
<path d="M1164 247.5H1170" stroke="#000"/>
<path d="M1166 256.5H1170" stroke="#000"/>
<path d="M1166 265.5H1170" stroke="#000"/>
<path d="M1166 274.5H1170" stroke="#000"/>
<path d="M1166 282.5H1170" stroke="#000"/>
<path d="M1164 291.5H1170" stroke="#000"/>
<path d="M1166 300.5H1170" stroke="#000"/>
<path d="M1166 309.5H1170" stroke="#000"/>
<path d="M1166 318.5H1170" stroke="#000"/>
<path d="M1166 327.5H1170" stroke="#000"/>
<path d="M1164 335.5H1170" stroke="#000"/>
<path d="M1166 344.5H1170" stroke="#000"/>
<path d="M1166 353.5H1170" stroke="#000"/>
<path d="M1166 362.5H1170" stroke="#000"/>
<path d="M1166 371.5H1170" stroke="#000"/>
<path d="M1164 380.5H1170" stroke="#000"/>
<path d="M1166 388.5H1170" stroke="#000"/>
<path d="M1166 397.5H1170" stroke="#000"/>
<path d="M1166 406.5H1170" stroke="#000"/>
<path d="M1166 415.5H1170" stroke="#000"/>
<path d="M1164 424.5H1170" stroke="#000"/>
<path d="M1166 433.5H1170" stroke="#000"/>
<path d="M1166 441.5H1170" stroke="#000"/>
<path d="M1166 450.5H1170" stroke="#000"/>
<path d="M1166 459.5H1170" stroke="#000"/>
<path d="M1164 468.5H1170" stroke="#000"/>
<path d="M1166 477.5H1170" stroke="#000"/>
<path d="M1166 486.5H1170" stroke="#000"/>
<path d="M1166 495.5H1170" stroke="#000"/>
<path d="M1166 503.5H1170" stroke="#000"/>
<path d="M1164 512.5H1170" stroke="#000"/>
<path d="M1166 521.5H1170" stroke="#000"/>
<path d="M1166 530.5H1170" stroke="#000"/>
<path d="M218.5 535V539" stroke="#000"/>
<path d="M266.5 535V539" stroke="#000"/>
<path d="M314.5 535V539" stroke="#000"/>
<path d="M362.5 535V539" stroke="#000"/>
<path d="M410.5 535V539" stroke="#000"/>
<path d="M458.5 535V539" stroke="#000"/>
<path d="M506.5 535V539" stroke="#000"/>
<path d="M554.5 535V539" stroke="#000"/>
<path d="M602.5 535V539" stroke="#000"/>
<path d="M650.5 535V539" stroke="#000"/>
<path d="M698.5 535V539" stroke="#000"/>
<path d="M746.5 535V539" stroke="#000"/>
<path d="M794.5 535V539" stroke="#000"/>
<path d="M842.5 535V539" stroke="#000"/>
<path d="M890.5 535V539" stroke="#000"/>
<path d="M938.5 535V539" stroke="#000"/>
<path d="M986.5 535V539" stroke="#000"/>
<path d="M1034.5 535V539" stroke="#000"/>
<path d="M1082.5 535V539" stroke="#000"/>
<path d="M1130.5 535V539" stroke="#000"/>
<rect x="137" y="556" width="1085" height="2" fill="#808084"/>
<defs><linearGradient id="nb" x1="0" y1="0" x2="0" y2="1"><stop offset="0" stop-color="#d3e6ec"/><stop offset="0.5" stop-color="#dde9ee"/><stop offset="1" stop-color="#e5ebf6"/></linearGradient></defs>
<rect x="138" y="558" width="1084" height="60" fill="#fff"/>
<path d="M139 618V568.3 L139.3,568.3 151.6,568.3 157.1,571.4 163.2,568.6 165.4,570.3 167.7,569.2 171.6,569.2 173.8,568.3 177.1,567.4 181.6,567.4 185.4,569.2 189.3,569.2 191.6,567.2 193.2,569.2 195.4,569.2 197.7,566.3 201.6,566.1 203.6,565.2 207.1,568.3 212.7,568.9 217.1,566.1 221.6,568.3 223.8,570.6 225.4,576.3 231.6,571.7 233.2,573.3 237.1,571.4 239.3,572.2 242.7,570.3 246,570 248.2,567.2 251.6,567.2 253.8,568.3 262.1,568.3 267.1,566.3 280.4,566.3 282.7,567.4 284.9,566.3 291,565.6 292.7,566.1 296,566.1 301.6,561.4 303.8,562.2 310.4,563 312.7,563.9 316.6,568.1 319.3,567.2 321.6,568.3 324.9,569.2 329.3,567.2 332.7,568.9 335.4,569.7 337.7,571.4 340.4,570.3 343.8,568.3 345.4,568.6 347.3,571.4 349.3,569.4 352.7,569.2 355.4,568.3 358.2,569.4 362.7,570 366,570.3 368.2,569.2 378.2,569.2 381.6,568.1 383.8,569.4 386,568.3 388.2,569.4 389.9,568.3 406,568.3 408.2,567.2 411.6,567.2 413.8,568.3 424.9,568.3 427.1,569.2 431.6,569.2 433.8,570.6 438.2,576.3 441,580 L440 618Z" fill="url(#nb)" shape-rendering="auto"/>
<polyline points="139.3,568.3 151.6,568.3 157.1,571.4 163.2,568.6 165.4,570.3 167.7,569.2 171.6,569.2 173.8,568.3 177.1,567.4 181.6,567.4 185.4,569.2 189.3,569.2 191.6,567.2 193.2,569.2 195.4,569.2 197.7,566.3 201.6,566.1 203.6,565.2 207.1,568.3 212.7,568.9 217.1,566.1 221.6,568.3 223.8,570.6 225.4,576.3 231.6,571.7 233.2,573.3 237.1,571.4 239.3,572.2 242.7,570.3 246,570 248.2,567.2 251.6,567.2 253.8,568.3 262.1,568.3 267.1,566.3 280.4,566.3 282.7,567.4 284.9,566.3 291,565.6 292.7,566.1 296,566.1 301.6,561.4 303.8,562.2 310.4,563 312.7,563.9 316.6,568.1 319.3,567.2 321.6,568.3 324.9,569.2 329.3,567.2 332.7,568.9 335.4,569.7 337.7,571.4 340.4,570.3 343.8,568.3 345.4,568.6 347.3,571.4 349.3,569.4 352.7,569.2 355.4,568.3 358.2,569.4 362.7,570 366,570.3 368.2,569.2 378.2,569.2 381.6,568.1 383.8,569.4 386,568.3 388.2,569.4 389.9,568.3 406,568.3 408.2,567.2 411.6,567.2 413.8,568.3 424.9,568.3 427.1,569.2 431.6,569.2 433.8,570.6 438.2,576.3 441,580" fill="none" stroke="#111" stroke-width="1.2" shape-rendering="auto"/>
<path d="M139.5 558V618" stroke="#9a9a9a"/>
<path d="M261.5 558V618" stroke="#707070"/>
<path d="M377.5 558V618" stroke="#707070"/>
<rect x="700" y="558" width="447" height="60" fill="#fdf9d6"/>
<path d="M990 618V597 L990,597 1002,596.7 1008,597.5 1015,597.5 1020,598.3 1025,597.5 1030,597.2 1034,596.7 1038,595.3 1041,596.4 1045,597 1048,596.4 1052,598.3 1054,598.3 1056,602 1060,603 1065,604 1072,604.5 1080,605.5 1090,605.5 1100,605.5 1110,604.5 1116,603.8 1120,604.5 1130,605.5 1140,606 1146,606.5 L1147 618Z" fill="#e0ecc6" shape-rendering="auto"/>
<polyline points="990,597 1002,596.7 1008,597.5 1015,597.5 1020,598.3 1025,597.5 1030,597.2 1034,596.7 1038,595.3 1041,596.4 1045,597 1048,596.4 1052,598.3 1054,598.3 1056,602 1060,603 1065,604 1072,604.5 1080,605.5 1090,605.5 1100,605.5 1110,604.5 1116,603.8 1120,604.5 1130,605.5 1140,606 1146,606.5" fill="none" stroke="#222" stroke-width="1" shape-rendering="auto"/>
<path d="M1091.5 558V618" stroke="#8a8a6a"/>
<rect x="1146" y="558" width="2" height="60" fill="#000"/>
<rect x="1170" y="558" width="2" height="60" fill="#000"/>
<path d="M1166 561.5H1170" stroke="#000"/>
<path d="M1166 566.5H1170" stroke="#000"/>
<path d="M1166 572.5H1170" stroke="#000"/>
<path d="M1164 577.5H1170" stroke="#000"/>
<path d="M1166 582.5H1170" stroke="#000"/>
<path d="M1166 588.5H1170" stroke="#000"/>
<path d="M1166 593.5H1170" stroke="#000"/>
<path d="M1166 598.5H1170" stroke="#000"/>
<path d="M1166 603.5H1170" stroke="#000"/>
<path d="M1164 609.5H1170" stroke="#000"/>
<path d="M1166 614.5H1170" stroke="#000"/>
<rect x="137" y="618" width="1085" height="24" fill="#eeeef2"/>
<path d="M138 621.5H990" stroke="#8a8a90"/>
<rect x="137" y="642" width="1085" height="1" fill="#7a82a0"/>
</svg>
<svg class="a" style="left:0;top:0" width="1440" height="900">
<path d="M143 621.5L149 638.5H185L191 621.5" fill="#fff" stroke="#6a6a70"/>
<path d="M188 621.5L194 638.5H230L236 621.5" fill="#fff" stroke="#6a6a70"/>
<path d="M234 621.5L240 638.5H280L286 621.5" fill="#fff" stroke="#6a6a70"/>
<path d="M285 621.5L291 638.5H333L339 621.5" fill="#fff" stroke="#6a6a70"/>
<path d="M338 621.5L344 638.5H385L391 621.5" fill="#fff" stroke="#6a6a70"/>
<path d="M390 621.5L396 638.5H435L441 621.5" fill="#fff" stroke="#6a6a70"/>
</svg>
<div class="t" style="left:-34px;width:400px;text-align:center;top:624px;font-size:12px;color:#111;letter-spacing:0.3px">1 min</div>
<div class="t" style="left:8px;width:400px;text-align:center;top:624px;font-size:12px;color:#111;letter-spacing:0.3px">5 min</div>
<div class="t" style="left:59.5px;width:400px;text-align:center;top:624px;font-size:12px;color:#111;letter-spacing:0.3px">10 min</div>
<div class="t" style="left:111px;width:400px;text-align:center;top:624px;font-size:12px;color:#000;font-weight:bold;">15 min</div>
<div class="t" style="left:164px;width:400px;text-align:center;top:624px;font-size:12px;color:#111;letter-spacing:0.3px">20 min</div>
<div class="t" style="left:216px;width:400px;text-align:center;top:624px;font-size:12px;color:#111;letter-spacing:0.3px">30 min</div>
<div class="t" style="left:145px;top:101px;font-size:13px;color:#1a1a1a;font-weight:bold;letter-spacing:-0.05px">EURUSD.FXCM (andreybbrv) - 15 min</div>
<div class="t" style="left:148px;top:120px;font-size:11px;color:#111;letter-spacing:-0.3px">Elliott Wave</div>
<div class="t" style="left:181px;top:519px;font-size:11px;color:#111;letter-spacing:0.2px">MotiveWave</div>
<svg class="a" style="left:141px;top:518px;" width="38" height="14" viewBox="0 0 38 14"><path d="M1 7L6 2V5H10V2L15 7L10 12V9H6V12Z" fill="#fff" stroke="#888" stroke-width=".9"/><path d="M18 5H22V2L27 7L22 12V9H18Z M37 5H33V2L28 7L33 12V9H37Z" fill="#fff" stroke="#888" stroke-width=".9"/></svg>
<svg class="a" style="left:1120px;top:97px;" width="44" height="14" viewBox="0 0 44 14"><path d="M1 5H6V1L12 7L6 13V9H1Z" fill="#fff" stroke="#777" stroke-width=".9"/><path d="M18 1H22V7H26L20 13L14 7H18Z" fill="#fff" stroke="#777" stroke-width=".9"/><path d="M33 13H37V7H41L35 1L29 7H33Z" fill="#fff" stroke="#777" stroke-width=".9"/></svg>
<svg class="a" style="left:1132px;top:517px;" width="30" height="14" viewBox="0 0 30 14"><path d="M4 13H8V7H12L6 1L0 7H4Z" fill="#fff" stroke="#888" stroke-width=".9"/><path d="M20 1H24V7H28L22 13L16 7H20Z" fill="#fff" stroke="#888" stroke-width=".9"/></svg>
<svg class="a" style="left:530px;top:115px;" width="13" height="13" viewBox="0 0 13 13"><circle cx="6.5" cy="6.5" r="5.8" fill="none" stroke="#111" stroke-width="1"/></svg>
<div class="t" style="left:336.5px;width:400px;text-align:center;top:117px;font-size:11px;color:#111;">0</div>
<div class="t" style="left:372.5px;width:400px;text-align:center;top:177px;font-size:11px;color:#111;">(2)</div>
<div class="t" style="left:360.5px;width:400px;text-align:center;top:235px;font-size:11px;color:#111;">(1)</div>
<div class="t" style="left:810.5px;width:400px;text-align:center;top:411px;font-size:11px;color:#111;">(2)</div>
<div class="t" style="left:873px;width:400px;text-align:center;top:511px;font-size:11px;color:#111;">(3)</div>
<div class="t" style="left:1173px;top:109px;font-size:12px;color:#111;letter-spacing:0.1px">1.34450</div>
<div class="t" style="left:1173px;top:153px;font-size:12px;color:#111;letter-spacing:0.1px">1.34400</div>
<div class="t" style="left:1173px;top:197px;font-size:12px;color:#111;letter-spacing:0.1px">1.34350</div>
<div class="t" style="left:1173px;top:241px;font-size:12px;color:#111;letter-spacing:0.1px">1.34300</div>
<div class="t" style="left:1173px;top:285px;font-size:12px;color:#111;letter-spacing:0.1px">1.34250</div>
<div class="t" style="left:1173px;top:330px;font-size:12px;color:#111;letter-spacing:0.1px">1.34200</div>
<div class="t" style="left:1173px;top:374px;font-size:12px;color:#111;letter-spacing:0.1px">1.34150</div>
<div class="t" style="left:1173px;top:418px;font-size:12px;color:#111;letter-spacing:0.1px">1.34100</div>
<div class="t" style="left:1173px;top:462px;font-size:12px;color:#111;letter-spacing:0.1px">1.34050</div>
<div class="t" style="left:1173px;top:506px;font-size:12px;color:#111;letter-spacing:0.1px">1.34000</div>
<div class="t" style="left:1173px;top:572px;font-size:12px;color:#111;letter-spacing:0.1px">1.35000</div>
<div class="t" style="left:1173px;top:603px;font-size:12px;color:#111;letter-spacing:0.1px">1.34000</div>
<svg class="a" style="left:1164px;top:380px;" width="58" height="14" viewBox="0 0 58 14"><defs><linearGradient id="g380" x1="0" x2="0" y1="0" y2="1"><stop offset="0" stop-color="#eef4fc"/><stop offset="1" stop-color="#b6cfee"/></linearGradient></defs><path d="M1 7.0L8 0.5H56.5V12.5H8Z" fill="url(#g380)" stroke="#5a5a5a"/></svg><div class="t" style="left:1173px;top:381px;font-size:12px;color:#111;letter-spacing:0.1px">1.34142</div>
<svg class="a" style="left:1164px;top:446px;" width="58" height="14" viewBox="0 0 58 14"><defs><linearGradient id="g446" x1="0" x2="0" y1="0" y2="1"><stop offset="0" stop-color="#fbd6fb"/><stop offset="1" stop-color="#de7ede"/></linearGradient></defs><path d="M1 7.0L8 0.5H56.5V12.5H8Z" fill="url(#g446)" stroke="#5a5a5a"/></svg><div class="t" style="left:1173px;top:447px;font-size:12px;color:#111;letter-spacing:0.1px">1.34067</div>
<svg class="a" style="left:1164px;top:468px;" width="58" height="14" viewBox="0 0 58 14"><defs><linearGradient id="g468" x1="0" x2="0" y1="0" y2="1"><stop offset="0" stop-color="#ffffff"/><stop offset="1" stop-color="#ffffff"/></linearGradient></defs><path d="M1 7.0L8 0.5H56.5V12.5H8Z" fill="url(#g468)" stroke="#5a5a5a"/></svg><div class="t" style="left:1173px;top:469px;font-size:12px;color:#111;letter-spacing:0.1px">1.34042</div>
<svg class="a" style="left:1164px;top:494px;" width="58" height="14" viewBox="0 0 58 14"><defs><linearGradient id="g494" x1="0" x2="0" y1="0" y2="1"><stop offset="0" stop-color="#fbe4e4"/><stop offset="1" stop-color="#e8a4a4"/></linearGradient></defs><path d="M1 7.0L8 0.5H56.5V12.5H8Z" fill="url(#g494)" stroke="#5a5a5a"/></svg><div class="t" style="left:1173px;top:495px;font-size:12px;color:#111;letter-spacing:0.1px">1.34013</div>
<div class="t" style="left:18.5px;width:400px;text-align:center;top:541px;font-size:12px;color:#111;letter-spacing:0.3px">июл-29</div>
<div class="t" style="left:66.5px;width:400px;text-align:center;top:541px;font-size:12px;color:#111;letter-spacing:0.3px">2:00</div>
<div class="t" style="left:114.5px;width:400px;text-align:center;top:541px;font-size:12px;color:#111;letter-spacing:0.3px">4:00</div>
<div class="t" style="left:162.5px;width:400px;text-align:center;top:541px;font-size:12px;color:#111;letter-spacing:0.3px">6:00</div>
<div class="t" style="left:210.5px;width:400px;text-align:center;top:541px;font-size:12px;color:#111;letter-spacing:0.3px">8:00</div>
<div class="t" style="left:834.5px;width:400px;text-align:center;top:541px;font-size:12px;color:#111;letter-spacing:0.3px">10:00</div>
<div class="t" style="left:882.5px;width:400px;text-align:center;top:541px;font-size:12px;color:#111;letter-spacing:0.3px">12:00</div>
<div class="t" style="left:930.5px;width:400px;text-align:center;top:541px;font-size:12px;color:#111;letter-spacing:0.3px">14:00</div>
<div class="t" style="left:143px;top:603px;font-size:12px;color:#111;letter-spacing:0.2px">июл-18</div>
<div class="t" style="left:265px;top:603px;font-size:12px;color:#111;letter-spacing:0.2px">июл-20</div>
<div class="t" style="left:381px;top:603px;font-size:12px;color:#111;letter-spacing:0.2px">июл-22</div>
<div class="t" style="left:1095px;top:603px;font-size:12px;color:#333;letter-spacing:0.2px">июл-30</div>
<div class="t" style="left:977px;top:603px;font-size:12px;color:#333;letter-spacing:0.2px">июл-29</div>
<svg class="a" style="left:1150px;top:561px;" width="12" height="12" viewBox="0 0 12 12"><path d="M2 2L10 10M10 2L2 10" stroke="#999" stroke-width="3.2"/><path d="M2 2L10 10M10 2L2 10" stroke="#fff" stroke-width="1.6"/></svg>
<div class="a" style="left:990px;top:621px;width:87px;height:21px;background:linear-gradient(#fbfbfb,#dedee0);border-top:2px solid #6c6c70;border-right:2px solid #6c6c70;box-sizing:border-box"></div>
<svg class="a" style="left:1083px;top:622px;" width="16" height="17" viewBox="0 0 16 17"><path d="M1 0V15H15" stroke="#2a5ab8" stroke-width="1.3" fill="none"/><path d="M2 12Q6 2 10 6T15 3" stroke="#d04040" fill="none"/><path d="M2 10Q6 14 10 9T15 10" stroke="#30a030" fill="none"/><circle cx="12" cy="13" r="3.5" fill="#30a030"/><path d="M12 11V15M10 13H14" stroke="#fff"/></svg>
<div class="a" style="left:1104px;top:619px;width:22px;height:22px;background:#c6c6ca"></div>
<svg class="a" style="left:1106px;top:624px;" width="17" height="11" viewBox="0 0 17 11"><path d="M1 5.5Q8.5 -2 16 5.5Q8.5 13 1 5.5Z" fill="#eee" stroke="#444"/><circle cx="8.5" cy="5.5" r="3" fill="#555"/></svg>
<svg class="a" style="left:1132px;top:622px;" width="16" height="17" viewBox="0 0 16 17"><rect x="2" y="1" width="3" height="15" fill="#777"/><circle cx="11" cy="11" r="4.5" fill="#ddd" stroke="#aaa"/></svg>
<svg class="a" style="left:1154px;top:625px;" width="17" height="11" viewBox="0 0 17 11"><path d="M0.5 0V11M16.5 0V11" stroke="#111"/><path d="M3 5.5L6 2.5V8.5Z M14 5.5L11 2.5V8.5Z" fill="#1e70d0"/><path d="M5 5.5H12" stroke="#1e70d0" stroke-width="2"/></svg>
<svg class="a" style="left:1178px;top:622px;" width="17" height="17" viewBox="0 0 17 17"><rect x="0.5" y="2.5" width="14" height="13" fill="#fff" stroke="#d03030"/><rect x="1" y="3" width="13" height="4" fill="#e04040"/><path d="M9 11H16M13 8L16 11L13 14" stroke="#2a8ae8" stroke-width="1.6" fill="none"/></svg>
<svg class="a" style="left:1200px;top:622px;" width="17" height="17" viewBox="0 0 17 17"><circle cx="7.5" cy="8.5" r="7" fill="#f4f4f4" stroke="#999"/><path d="M7 3V9H4" stroke="#333" fill="none"/><path d="M9 12H16M13 9L16 12L13 15" stroke="#2a8ae8" stroke-width="1.6" fill="none"/></svg>
<div class="a" style="left:1222px;top:95px;width:4px;height:548px;background:#e6e6ea"></div>
<div class="a" style="left:1226px;top:95px;width:1px;height:548px;background:#8a8a90"></div>
<div class="a" style="left:1223px;top:355px;width:2px;height:2px;background:#555"></div>
<div class="a" style="left:1223px;top:361px;width:2px;height:2px;background:#555"></div>
<div class="a" style="left:1223px;top:367px;width:2px;height:2px;background:#555"></div>
<div class="a" style="left:1223px;top:373px;width:2px;height:2px;background:#555"></div>
<div class="a" style="left:1223px;top:379px;width:2px;height:2px;background:#555"></div>
<div class="a" style="left:1227px;top:95px;width:211px;height:548px;background:#eeeef2"></div>
<div class="a" style="left:1436px;top:95px;width:1px;height:548px;background:#7a82a0"></div>
<div class="a" style="left:1227px;top:95px;width:210px;height:20px;background:linear-gradient(#fdfdfd,#d9d9dc)"></div>
<div class="t" style="left:1232px;top:100px;font-size:12px;color:#111;font-weight:bold;">Trade</div>
<svg class="a" style="left:1420px;top:102px;" width="9" height="8" viewBox="0 0 9 8"><path d="M1 0.5L8 7.5M8 0.5L1 7.5" stroke="#111" stroke-width="1.7"/></svg>
<div class="a" style="left:1230px;top:118px;width:61px;height:25px;background:#0a74d4"></div>
<div class="a" style="left:1230px;top:142px;width:204px;height:2px;background:#0a74d4"></div>
<div class="t" style="left:1238px;top:125px;font-size:12px;color:#fff;letter-spacing:0.3px">Position</div>
<div class="t" style="left:1299px;top:125px;font-size:12px;color:#111;letter-spacing:0.3px">Order</div>
<div class="t" style="left:1346px;top:125px;font-size:12px;color:#111;letter-spacing:0.3px">Bid/Ask</div>
<div class="a" style="left:1267px;top:152px;width:61px;height:23px;background:linear-gradient(#4a8ae0,#1c50b0);border:1px solid #284a80;border-radius:4px;box-sizing:border-box"></div><div class="t" style="left:1267px;width:61px;text-align:center;top:156px;font-size:12px;color:#fff;font-weight:bold;letter-spacing:-0.4px;line-height:14px">Buy Mkt</div>
<div class="a" style="left:1336px;top:152px;width:61px;height:23px;background:linear-gradient(#e04848,#b01e1e);border:1px solid #802828;border-radius:4px;box-sizing:border-box"></div><div class="t" style="left:1336px;width:61px;text-align:center;top:156px;font-size:12px;color:#fff;font-weight:bold;letter-spacing:-0.4px;line-height:14px">Sell Mkt</div>
<div class="a" style="left:1279px;top:179px;width:90px;height:24px;background:#fdfdfd;border:1px solid #dcdce0;box-sizing:border-box"></div>
<div class="t" style="right:94px;top:186px;font-size:12px;color:#111;">10K</div>
<svg class="a" style="left:1355px;top:184px;" width="7" height="13" viewBox="0 0 7 13"><path d="M1 4.5L3.5 1L6 4.5Z M1 8.5L3.5 12L6 8.5Z" fill="#111"/></svg>
<svg class="a" style="left:1373px;top:186px;" width="11" height="10" viewBox="0 0 11 10"><path d="M0 0.5H8M0 3.5H8M0 6.5H6" stroke="#333"/><path d="M6 7H11L8.5 10Z" fill="#333"/></svg>
<div class="a" style="left:1256px;top:207px;width:72px;height:23px;background:linear-gradient(#e2e2e4,#d2d2d4);border:1px solid #c0c0c4;border-radius:4px;box-sizing:border-box"></div><div class="t" style="left:1256px;width:72px;text-align:center;top:211px;font-size:12px;color:#8a8a8e;font-weight:bold;letter-spacing:-0.4px;line-height:14px">Flatten</div>
<div class="a" style="left:1336px;top:207px;width:72px;height:23px;background:linear-gradient(#e2e2e4,#d2d2d4);border:1px solid #c0c0c4;border-radius:4px;box-sizing:border-box"></div><div class="t" style="left:1336px;width:72px;text-align:center;top:211px;font-size:12px;color:#8a8a8e;font-weight:bold;letter-spacing:-0.4px;line-height:14px">Cancel All</div>
<div class="a" style="left:1300px;top:234px;width:63px;height:23px;background:linear-gradient(#e0e0e2,#d0d0d2);border:1px solid #c0c0c4;border-radius:4px;box-sizing:border-box"></div><div class="t" style="left:1300px;width:63px;text-align:center;top:238px;font-size:12px;color:#f4f4f4;font-weight:bold;letter-spacing:-0.4px;line-height:14px">Reverse</div>
<div class="a" style="left:1292px;top:290px;width:84px;height:23px;background:#fdfdfd;border:1px solid #e0e0e4;box-sizing:border-box"></div>
<div class="t" style="left:1298px;top:296px;font-size:12px;color:#111;letter-spacing:0.2px">simulated</div>
<svg class="a" style="left:1363px;top:297px;" width="7" height="6" viewBox="0 0 7 6"><path d="M0 0H7L3.5 6Z" fill="#111"/></svg>
<div class="a" style="left:1247px;top:314px;width:100px;height:20px;background:#000"></div>
<div class="a" style="left:1352px;top:314px;width:70px;height:20px;background:#000"></div>
<div class="t" style="right:93px;top:319px;font-size:12px;color:#fff;font-weight:bold;letter-spacing:-0.3px">N/A</div>
<div class="t" style="right:18px;top:319px;font-size:12px;color:#fff;font-weight:bold;letter-spacing:-0.3px">N/A</div>
<div class="a" style="left:1231px;top:339px;width:202px;height:78px;border:1px solid #6e6e72;border-radius:5px;box-sizing:border-box;background:#eeeef2"></div>
<div class="a" style="left:1232px;top:360px;width:200px;height:1px;background:#6e6e72"></div>
<div class="t" style="left:1236px;top:345px;font-size:12px;color:#333;font-weight:bold;letter-spacing:-0.3px">Entry/Exit</div>
<svg class="a" style="left:1393px;top:342px;" width="17" height="16" viewBox="0 0 17 16"><path d="M2 14L4 9L12 1Q14 0 15 2L15 3L7 11Z" fill="#f6d860" stroke="#c08020" stroke-width="1"/><path d="M2 14L4 9L7 11Z" fill="#f0c8a0"/></svg>
<svg class="a" style="left:1416px;top:348px;" width="10" height="6" viewBox="0 0 10 6"><path d="M0 0H10L5 5.5Z" fill="#111"/></svg>
<div class="a" style="left:1235px;top:363px;width:116px;height:23px;background:#fdfdfd;border:1px solid #e0e0e4;box-sizing:border-box"></div>
<div class="t" style="left:1240px;top:369px;font-size:12px;color:#111;letter-spacing:0.2px">Breakout</div>
<svg class="a" style="left:1339px;top:372px;" width="7" height="6" viewBox="0 0 7 6"><path d="M0 0H7L3.5 6Z" fill="#111"/></svg>
<div class="a" style="left:1356px;top:363px;width:21px;height:22px;background:linear-gradient(#f8f8f8,#e0e0e2);border:1px solid #8a8a8e;border-radius:3px;box-sizing:border-box"></div>
<svg class="a" style="left:1362px;top:367px;" width="8" height="14" viewBox="0 0 8 14"><path d="M0.5 0.5L7.5 7L0.5 13.5Z" fill="#5aa0f0" stroke="#2a70c0"/></svg>
<div class="a" style="left:1235px;top:389px;width:57px;height:24px;background:#fdfdfd;border:1px solid #e0e0e4;box-sizing:border-box"></div>
<div class="t" style="right:167px;top:396px;font-size:12px;color:#111;">10K</div>
<svg class="a" style="left:1279px;top:394px;" width="7" height="13" viewBox="0 0 7 13"><path d="M1 4.5L3.5 1L6 4.5Z M1 8.5L3.5 12L6 8.5Z" fill="#111"/></svg>
<div class="a" style="left:1298px;top:389px;width:54px;height:24px;background:#fdfdfd;border:1px solid #e0e0e4;box-sizing:border-box"></div>
<div class="t" style="left:1303px;top:396px;font-size:12px;color:#111;letter-spacing:0.2px">DAY</div>
<svg class="a" style="left:1340px;top:397px;" width="7" height="6" viewBox="0 0 7 6"><path d="M0 0H7L3.5 6Z" fill="#111"/></svg>
<div class="a" style="left:1358px;top:389px;width:47px;height:24px;background:#fdfdfd;border:1px solid #e0e0e4;box-sizing:border-box"></div>
<div class="t" style="left:1363px;top:396px;font-size:12px;color:#111;letter-spacing:0.3px">100</div>
<svg class="a" style="left:1390px;top:394px;" width="7" height="13" viewBox="0 0 7 13"><path d="M1 4.5L3.5 1L6 4.5Z M1 8.5L3.5 12L6 8.5Z" fill="#111"/></svg>
<div class="a" style="left:3px;top:642px;width:1435px;height:1px;background:#7a82a0"></div>
<div class="a" style="left:3px;top:647px;width:942px;height:23px;background:#eeeef2;border-top:1px solid #c0c4cc;box-sizing:border-box"></div>
<div class="a" style="left:3px;top:648px;width:57px;height:22px;background:linear-gradient(#f4f4f6,#fff);border:1px solid #c8ccd4;border-bottom:none;border-radius:5px 5px 0 0;box-sizing:border-box"></div>
<div class="t" style="left:8px;top:654px;font-size:12px;color:#111;letter-spacing:-0.3px;font-size:11.5px">NYSE</div>
<svg class="a" style="left:45px;top:654px;" width="10" height="10" viewBox="0 0 10 10"><path d="M1 1L9 9M9 1L1 9" stroke="#777" stroke-width="3"/><path d="M1 1L9 9M9 1L1 9" stroke="#fff" stroke-width="1.4"/></svg>
<div class="t" style="left:66px;top:654px;font-size:12px;color:#111;">NASDAQ</div>
<div class="t" style="left:145px;top:654px;font-size:12px;color:#111;letter-spacing:0.4px">Alerts</div>
<svg class="a" style="left:203px;top:653px;" width="17" height="13" viewBox="0 0 17 13"><path d="M1 12L2 6H12V12Z" fill="#f4f4f4" stroke="#999"/><path d="M0.5 12.5H15" stroke="#888"/><path d="M12 0V8M8 4H16" stroke="#2aaa2a" stroke-width="2.4"/></svg>
<div class="a" style="left:3px;top:670px;width:930px;height:17px;background:linear-gradient(#fafafb,#ededf0);border-bottom:1px solid #c8c8d0;box-sizing:border-box"></div>
<div class="a" style="left:82px;top:670px;width:1px;height:17px;background:#d4d4da"></div>
<div class="t" style="left:5px;top:673px;font-size:13px;width:77px;overflow:hidden;white-space:nowrap;letter-spacing:0px;color:#111">Symbol</div>
<div class="a" style="left:157px;top:670px;width:1px;height:17px;background:#d4d4da"></div>
<div class="t" style="left:85px;top:673px;font-size:13px;width:72px;overflow:hidden;white-space:nowrap;letter-spacing:0px;color:#111">Exchange</div>
<div class="a" style="left:217px;top:670px;width:1px;height:17px;background:#d4d4da"></div>
<div class="t" style="left:160px;top:673px;font-size:13px;width:57px;overflow:hidden;white-space:nowrap;letter-spacing:0px;color:#111">Bid Size</div>
<div class="a" style="left:287px;top:670px;width:1px;height:17px;background:#d4d4da"></div>
<div class="t" style="left:220px;top:673px;font-size:13px;width:67px;overflow:hidden;white-space:nowrap;letter-spacing:0px;color:#111">Bid</div>
<div class="a" style="left:357px;top:670px;width:1px;height:17px;background:#d4d4da"></div>
<div class="t" style="left:290px;top:673px;font-size:13px;width:67px;overflow:hidden;white-space:nowrap;letter-spacing:0px;color:#111">Ask</div>
<div class="a" style="left:417px;top:670px;width:1px;height:17px;background:#d4d4da"></div>
<div class="t" style="left:360px;top:673px;font-size:13px;width:57px;overflow:hidden;white-space:nowrap;letter-spacing:0px;color:#111">Ask Size</div>
<div class="a" style="left:487px;top:670px;width:1px;height:17px;background:#d4d4da"></div>
<div class="t" style="left:420px;top:673px;font-size:13px;width:67px;overflow:hidden;white-space:nowrap;letter-spacing:0px;color:#111">Last Price</div>
<div class="a" style="left:546px;top:670px;width:1px;height:17px;background:#d4d4da"></div>
<div class="t" style="left:490px;top:673px;font-size:13px;width:56px;overflow:hidden;white-space:nowrap;letter-spacing:0px;color:#111">Last Size</div>
<div class="a" style="left:617px;top:670px;width:1px;height:17px;background:#d4d4da"></div>
<div class="t" style="left:549px;top:673px;font-size:13px;width:68px;overflow:hidden;white-space:nowrap;letter-spacing:0px;color:#111">Change</div>
<div class="a" style="left:697px;top:670px;width:1px;height:17px;background:#d4d4da"></div>
<div class="t" style="left:620px;top:673px;font-size:13px;width:77px;overflow:hidden;white-space:nowrap;letter-spacing:0px;color:#111">% Change</div>
<div class="a" style="left:767px;top:670px;width:1px;height:17px;background:#d4d4da"></div>
<div class="t" style="left:700px;top:673px;font-size:13px;width:67px;overflow:hidden;white-space:nowrap;letter-spacing:0px;color:#111">High</div>
<div class="a" style="left:837px;top:670px;width:1px;height:17px;background:#d4d4da"></div>
<div class="t" style="left:770px;top:673px;font-size:13px;width:67px;overflow:hidden;white-space:nowrap;letter-spacing:0px;color:#111">Low</div>
<div class="a" style="left:921px;top:670px;width:1px;height:17px;background:#d4d4da"></div>
<div class="t" style="left:840px;top:673px;font-size:13px;width:81px;overflow:hidden;white-space:nowrap;letter-spacing:0px;color:#111">52 Week Hi...</div>
<div class="a" style="left:944px;top:670px;width:1px;height:17px;background:#d4d4da"></div>
<div class="t" style="left:924px;top:673px;font-size:13px;width:20px;overflow:hidden;white-space:nowrap;letter-spacing:0px;color:#111">5...</div>
<div class="a" style="left:3px;top:687px;width:930px;height:17px;background:#e9eff9"></div>
<div class="a" style="left:548px;top:687px;width:70px;height:17px;background:linear-gradient(#4a88da,#2a64c0 45%,#1a4aa4);border-right:1px solid #2a5090;box-sizing:border-box"></div>
<div class="a" style="left:619px;top:687px;width:79px;height:17px;background:linear-gradient(#4a88da,#2a64c0 45%,#1a4aa4);border-right:1px solid #2a5090;box-sizing:border-box"></div>
<div class="t" style="left:8px;top:689px;font-size:13px;color:#111;letter-spacing:-0.2px;font-size:13.5px">AEO</div>
<div class="t" style="left:102px;top:689px;font-size:13px;color:#111;letter-spacing:-0.1px;font-size:13.5px">NYSE</div>
<div class="t" style="right:1227px;top:689px;font-size:13px;color:#111;letter-spacing:-0.5px;font-size:13.5px">1,000</div>
<div class="t" style="right:1157px;top:689px;font-size:13px;color:#111;letter-spacing:-0.5px;font-size:13.5px">10.5000</div>
<div class="t" style="right:1087px;top:689px;font-size:13px;color:#111;letter-spacing:-0.5px;font-size:13.5px">11.0000</div>
<div class="t" style="right:1027px;top:689px;font-size:13px;color:#111;letter-spacing:-0.5px;font-size:13.5px">6,400</div>
<div class="t" style="right:957px;top:689px;font-size:13px;color:#111;letter-spacing:-0.5px;font-size:13.5px">10.5100</div>
<div class="t" style="right:898px;top:689px;font-size:13px;color:#111;letter-spacing:-0.5px;font-size:13.5px">260</div>
<div class="t" style="right:827px;top:689px;font-size:13px;color:#fff;letter-spacing:-0.5px;font-size:13.5px">0.2300</div>
<div class="t" style="right:747px;top:689px;font-size:13px;color:#fff;letter-spacing:-0.5px;font-size:13.5px">2.24%</div>
<div class="t" style="right:677px;top:689px;font-size:13px;color:#111;letter-spacing:-0.5px;font-size:13.5px">10.6000</div>
<div class="t" style="right:607px;top:689px;font-size:13px;color:#111;letter-spacing:-0.5px;font-size:13.5px">10.2800</div>
<div class="t" style="right:523px;top:689px;font-size:13px;color:#111;letter-spacing:-0.5px;font-size:13.5px">20.1200</div>
<div class="a" style="left:3px;top:704px;width:930px;height:17px;background:#f7f7f9"></div>
<div class="a" style="left:548px;top:704px;width:70px;height:17px;background:linear-gradient(#4a88da,#2a64c0 45%,#1a4aa4);border-right:1px solid #2a5090;box-sizing:border-box"></div>
<div class="a" style="left:619px;top:704px;width:79px;height:17px;background:linear-gradient(#4a88da,#2a64c0 45%,#1a4aa4);border-right:1px solid #2a5090;box-sizing:border-box"></div>
<div class="t" style="left:8px;top:706px;font-size:13px;color:#111;letter-spacing:-0.2px;font-size:13.5px">AXP</div>
<div class="t" style="left:102px;top:706px;font-size:13px;color:#111;letter-spacing:-0.1px;font-size:13.5px">NYSE</div>
<div class="t" style="right:1227px;top:706px;font-size:13px;color:#111;letter-spacing:-0.5px;font-size:13.5px">100</div>
<div class="t" style="right:1157px;top:706px;font-size:13px;color:#111;letter-spacing:-0.5px;font-size:13.5px">91.5600</div>
<div class="t" style="right:1087px;top:706px;font-size:13px;color:#111;letter-spacing:-0.5px;font-size:13.5px">92.0000</div>
<div class="t" style="right:1027px;top:706px;font-size:13px;color:#111;letter-spacing:-0.5px;font-size:13.5px">100</div>
<div class="t" style="right:957px;top:706px;font-size:13px;color:#111;letter-spacing:-0.5px;font-size:13.5px">91.8800</div>
<div class="t" style="right:898px;top:706px;font-size:13px;color:#111;letter-spacing:-0.5px;font-size:13.5px">30</div>
<div class="t" style="right:827px;top:706px;font-size:13px;color:#fff;letter-spacing:-0.5px;font-size:13.5px">0.0200</div>
<div class="t" style="right:747px;top:706px;font-size:13px;color:#fff;letter-spacing:-0.5px;font-size:13.5px">0.02%</div>
<div class="t" style="right:677px;top:706px;font-size:13px;color:#111;letter-spacing:-0.5px;font-size:13.5px">92.2300</div>
<div class="t" style="right:607px;top:706px;font-size:13px;color:#111;letter-spacing:-0.5px;font-size:13.5px">91.5100</div>
<div class="t" style="right:523px;top:706px;font-size:13px;color:#111;letter-spacing:-0.5px;font-size:13.5px">96.2400</div>
<div class="a" style="left:3px;top:721px;width:930px;height:17px;background:#e9eff9"></div>
<div class="a" style="left:548px;top:721px;width:70px;height:17px;background:linear-gradient(#4a88da,#2a64c0 45%,#1a4aa4);border-right:1px solid #2a5090;box-sizing:border-box"></div>
<div class="a" style="left:619px;top:721px;width:79px;height:17px;background:linear-gradient(#4a88da,#2a64c0 45%,#1a4aa4);border-right:1px solid #2a5090;box-sizing:border-box"></div>
<div class="t" style="left:8px;top:723px;font-size:13px;color:#111;letter-spacing:-0.2px;font-size:13.5px">BTU</div>
<div class="t" style="left:102px;top:723px;font-size:13px;color:#111;letter-spacing:-0.1px;font-size:13.5px">NYSE</div>
<div class="t" style="right:1227px;top:723px;font-size:13px;color:#111;letter-spacing:-0.5px;font-size:13.5px">300</div>
<div class="t" style="right:1157px;top:723px;font-size:13px;color:#111;letter-spacing:-0.5px;font-size:13.5px">15.5600</div>
<div class="t" style="right:1087px;top:723px;font-size:13px;color:#111;letter-spacing:-0.5px;font-size:13.5px">15.7800</div>
<div class="t" style="right:1027px;top:723px;font-size:13px;color:#111;letter-spacing:-0.5px;font-size:13.5px">1,000</div>
<div class="t" style="right:957px;top:723px;font-size:13px;color:#111;letter-spacing:-0.5px;font-size:13.5px">15.5300</div>
<div class="t" style="right:898px;top:723px;font-size:13px;color:#111;letter-spacing:-0.5px;font-size:13.5px">150</div>
<div class="t" style="right:827px;top:723px;font-size:13px;color:#fff;letter-spacing:-0.5px;font-size:13.5px">0.3800</div>
<div class="t" style="right:747px;top:723px;font-size:13px;color:#fff;letter-spacing:-0.5px;font-size:13.5px">2.51%</div>
<div class="t" style="right:677px;top:723px;font-size:13px;color:#111;letter-spacing:-0.5px;font-size:13.5px">15.7900</div>
<div class="t" style="right:607px;top:723px;font-size:13px;color:#111;letter-spacing:-0.5px;font-size:13.5px">15.2000</div>
<div class="t" style="right:523px;top:723px;font-size:13px;color:#111;letter-spacing:-0.5px;font-size:13.5px">21.2800</div>
<div class="a" style="left:3px;top:738px;width:930px;height:17px;background:#f7f7f9"></div>
<div class="a" style="left:548px;top:738px;width:70px;height:17px;background:linear-gradient(#d84a38,#b02818 45%,#8a1a10);border-right:1px solid #701a10;box-sizing:border-box"></div>
<div class="a" style="left:619px;top:738px;width:79px;height:17px;background:linear-gradient(#d84a38,#b02818 45%,#8a1a10);border-right:1px solid #701a10;box-sizing:border-box"></div>
<div class="t" style="left:8px;top:740px;font-size:13px;color:#111;letter-spacing:-0.2px;font-size:13.5px">CSX</div>
<div class="t" style="left:102px;top:740px;font-size:13px;color:#111;letter-spacing:-0.1px;font-size:13.5px">NYSE</div>
<div class="t" style="right:1227px;top:740px;font-size:13px;color:#111;letter-spacing:-0.5px;font-size:13.5px">200</div>
<div class="t" style="right:1157px;top:740px;font-size:13px;color:#111;letter-spacing:-0.5px;font-size:13.5px">30.4300</div>
<div class="t" style="right:1087px;top:740px;font-size:13px;color:#111;letter-spacing:-0.5px;font-size:13.5px">30.5000</div>
<div class="t" style="right:1027px;top:740px;font-size:13px;color:#111;letter-spacing:-0.5px;font-size:13.5px">100</div>
<div class="t" style="right:957px;top:740px;font-size:13px;color:#111;letter-spacing:-0.5px;font-size:13.5px">30.5200</div>
<div class="t" style="right:898px;top:740px;font-size:13px;color:#111;letter-spacing:-0.5px;font-size:13.5px">11.2K</div>
<div class="t" style="right:827px;top:740px;font-size:13px;color:#fff;letter-spacing:-0.5px;font-size:13.5px">-0.2100</div>
<div class="t" style="right:747px;top:740px;font-size:13px;color:#fff;letter-spacing:-0.5px;font-size:13.5px">-0.68%</div>
<div class="t" style="right:677px;top:740px;font-size:13px;color:#111;letter-spacing:-0.5px;font-size:13.5px">30.7799</div>
<div class="t" style="right:607px;top:740px;font-size:13px;color:#111;letter-spacing:-0.5px;font-size:13.5px">30.4400</div>
<div class="t" style="right:523px;top:740px;font-size:13px;color:#111;letter-spacing:-0.5px;font-size:13.5px">31.5900</div>
<div class="a" style="left:3px;top:755px;width:930px;height:17px;background:#e9eff9"></div>
<div class="a" style="left:548px;top:755px;width:70px;height:17px;background:linear-gradient(#d84a38,#b02818 45%,#8a1a10);border-right:1px solid #701a10;box-sizing:border-box"></div>
<div class="a" style="left:619px;top:755px;width:79px;height:17px;background:linear-gradient(#d84a38,#b02818 45%,#8a1a10);border-right:1px solid #701a10;box-sizing:border-box"></div>
<div class="t" style="left:8px;top:757px;font-size:13px;color:#111;letter-spacing:-0.2px;font-size:13.5px">DE</div>
<div class="t" style="left:102px;top:757px;font-size:13px;color:#111;letter-spacing:-0.1px;font-size:13.5px">NYSE</div>
<div class="t" style="right:1227px;top:757px;font-size:13px;color:#111;letter-spacing:-0.5px;font-size:13.5px">200</div>
<div class="t" style="right:1157px;top:757px;font-size:13px;color:#111;letter-spacing:-0.5px;font-size:13.5px">85.0100</div>
<div class="t" style="right:1087px;top:757px;font-size:13px;color:#111;letter-spacing:-0.5px;font-size:13.5px">86.5000</div>
<div class="t" style="right:1027px;top:757px;font-size:13px;color:#111;letter-spacing:-0.5px;font-size:13.5px">1,000</div>
<div class="t" style="right:957px;top:757px;font-size:13px;color:#111;letter-spacing:-0.5px;font-size:13.5px">85.8300</div>
<div class="t" style="right:898px;top:757px;font-size:13px;color:#111;letter-spacing:-0.5px;font-size:13.5px">20</div>
<div class="t" style="right:827px;top:757px;font-size:13px;color:#fff;letter-spacing:-0.5px;font-size:13.5px">-0.1800</div>
<div class="t" style="right:747px;top:757px;font-size:13px;color:#fff;letter-spacing:-0.5px;font-size:13.5px">-0.21%</div>
<div class="t" style="right:677px;top:757px;font-size:13px;color:#111;letter-spacing:-0.5px;font-size:13.5px">86.4600</div>
<div class="t" style="right:607px;top:757px;font-size:13px;color:#111;letter-spacing:-0.5px;font-size:13.5px">85.6900</div>
<div class="t" style="right:523px;top:757px;font-size:13px;color:#111;letter-spacing:-0.5px;font-size:13.5px">94.8900</div>
<div class="a" style="left:3px;top:772px;width:930px;height:17px;background:#f7f7f9"></div>
<div class="a" style="left:548px;top:772px;width:70px;height:17px;background:linear-gradient(#d84a38,#b02818 45%,#8a1a10);border-right:1px solid #701a10;box-sizing:border-box"></div>
<div class="a" style="left:619px;top:772px;width:79px;height:17px;background:linear-gradient(#d84a38,#b02818 45%,#8a1a10);border-right:1px solid #701a10;box-sizing:border-box"></div>
<div class="t" style="left:8px;top:774px;font-size:13px;color:#111;letter-spacing:-0.2px;font-size:13.5px">FCX</div>
<div class="t" style="left:102px;top:774px;font-size:13px;color:#111;letter-spacing:-0.1px;font-size:13.5px">NYSE</div>
<div class="t" style="right:1227px;top:774px;font-size:13px;color:#111;letter-spacing:-0.5px;font-size:13.5px">2,000</div>
<div class="t" style="right:1157px;top:774px;font-size:13px;color:#111;letter-spacing:-0.5px;font-size:13.5px">37.7200</div>
<div class="t" style="right:1087px;top:774px;font-size:13px;color:#111;letter-spacing:-0.5px;font-size:13.5px">0.0000</div>
<div class="t" style="right:1027px;top:774px;font-size:13px;color:#111;letter-spacing:-0.5px;font-size:13.5px">0</div>
<div class="t" style="right:957px;top:774px;font-size:13px;color:#111;letter-spacing:-0.5px;font-size:13.5px">37.8500</div>
<div class="t" style="right:898px;top:774px;font-size:13px;color:#111;letter-spacing:-0.5px;font-size:13.5px">50</div>
<div class="t" style="right:827px;top:774px;font-size:13px;color:#fff;letter-spacing:-0.5px;font-size:13.5px">-0.2100</div>
<div class="t" style="right:747px;top:774px;font-size:13px;color:#fff;letter-spacing:-0.5px;font-size:13.5px">-0.55%</div>
<div class="t" style="right:677px;top:774px;font-size:13px;color:#111;letter-spacing:-0.5px;font-size:13.5px">38.2600</div>
<div class="t" style="right:607px;top:774px;font-size:13px;color:#111;letter-spacing:-0.5px;font-size:13.5px">37.8800</div>
<div class="t" style="right:523px;top:774px;font-size:13px;color:#111;letter-spacing:-0.5px;font-size:13.5px">39.3200</div>
<div class="a" style="left:3px;top:789px;width:930px;height:17px;background:#e9eff9"></div>
<div class="a" style="left:548px;top:789px;width:70px;height:17px;background:linear-gradient(#d84a38,#b02818 45%,#8a1a10);border-right:1px solid #701a10;box-sizing:border-box"></div>
<div class="a" style="left:619px;top:789px;width:79px;height:17px;background:linear-gradient(#d84a38,#b02818 45%,#8a1a10);border-right:1px solid #701a10;box-sizing:border-box"></div>
<div class="t" style="left:8px;top:791px;font-size:13px;color:#111;letter-spacing:-0.2px;font-size:13.5px">FDX</div>
<div class="t" style="left:102px;top:791px;font-size:13px;color:#111;letter-spacing:-0.1px;font-size:13.5px">NYSE</div>
<div class="t" style="right:1227px;top:791px;font-size:13px;color:#111;letter-spacing:-0.5px;font-size:13.5px">100</div>
<div class="t" style="right:1157px;top:791px;font-size:13px;color:#111;letter-spacing:-0.5px;font-size:13.5px">147.0800</div>
<div class="t" style="right:1087px;top:791px;font-size:13px;color:#111;letter-spacing:-0.5px;font-size:13.5px">155.0000</div>
<div class="t" style="right:1027px;top:791px;font-size:13px;color:#111;letter-spacing:-0.5px;font-size:13.5px">100</div>
<div class="t" style="right:957px;top:791px;font-size:13px;color:#111;letter-spacing:-0.5px;font-size:13.5px">147.0000</div>
<div class="t" style="right:898px;top:791px;font-size:13px;color:#111;letter-spacing:-0.5px;font-size:13.5px">20</div>
<div class="t" style="right:827px;top:791px;font-size:13px;color:#fff;letter-spacing:-0.5px;font-size:13.5px">-2.5300</div>
<div class="t" style="right:747px;top:791px;font-size:13px;color:#fff;letter-spacing:-0.5px;font-size:13.5px">-1.69%</div>
<div class="t" style="right:677px;top:791px;font-size:13px;color:#111;letter-spacing:-0.5px;font-size:13.5px">149.8600</div>
<div class="t" style="right:607px;top:791px;font-size:13px;color:#111;letter-spacing:-0.5px;font-size:13.5px">147.0400</div>
<div class="t" style="right:523px;top:791px;font-size:13px;color:#111;letter-spacing:-0.5px;font-size:13.5px">155.3100</div>
<div class="a" style="left:3px;top:806px;width:930px;height:17px;background:#f7f7f9"></div>
<div class="a" style="left:548px;top:806px;width:70px;height:17px;background:linear-gradient(#4a88da,#2a64c0 45%,#1a4aa4);border-right:1px solid #2a5090;box-sizing:border-box"></div>
<div class="a" style="left:619px;top:806px;width:79px;height:17px;background:linear-gradient(#4a88da,#2a64c0 45%,#1a4aa4);border-right:1px solid #2a5090;box-sizing:border-box"></div>
<div class="t" style="left:8px;top:808px;font-size:13px;color:#111;letter-spacing:-0.2px;font-size:13.5px">GS</div>
<div class="t" style="left:102px;top:808px;font-size:13px;color:#111;letter-spacing:-0.1px;font-size:13.5px">NYSE</div>
<div class="t" style="right:1227px;top:808px;font-size:13px;color:#111;letter-spacing:-0.5px;font-size:13.5px">200</div>
<div class="t" style="right:1157px;top:808px;font-size:13px;color:#111;letter-spacing:-0.5px;font-size:13.5px">170.2700</div>
<div class="t" style="right:1087px;top:808px;font-size:13px;color:#111;letter-spacing:-0.5px;font-size:13.5px">176.4300</div>
<div class="t" style="right:1027px;top:808px;font-size:13px;color:#111;letter-spacing:-0.5px;font-size:13.5px">200</div>
<div class="t" style="right:957px;top:808px;font-size:13px;color:#111;letter-spacing:-0.5px;font-size:13.5px">176.0000</div>
<div class="t" style="right:898px;top:808px;font-size:13px;color:#111;letter-spacing:-0.5px;font-size:13.5px">16</div>
<div class="t" style="right:827px;top:808px;font-size:13px;color:#fff;letter-spacing:-0.5px;font-size:13.5px">0.0500</div>
<div class="t" style="right:747px;top:808px;font-size:13px;color:#fff;letter-spacing:-0.5px;font-size:13.5px">0.03%</div>
<div class="t" style="right:677px;top:808px;font-size:13px;color:#111;letter-spacing:-0.5px;font-size:13.5px">177.1099</div>
<div class="t" style="right:607px;top:808px;font-size:13px;color:#111;letter-spacing:-0.5px;font-size:13.5px">175.4500</div>
<div class="t" style="right:523px;top:808px;font-size:13px;color:#111;letter-spacing:-0.5px;font-size:13.5px">181.1300</div>
<div class="a" style="left:3px;top:823px;width:930px;height:17px;background:#e9eff9"></div>
<div class="a" style="left:548px;top:823px;width:70px;height:17px;background:linear-gradient(#d84a38,#b02818 45%,#8a1a10);border-right:1px solid #701a10;box-sizing:border-box"></div>
<div class="a" style="left:619px;top:823px;width:79px;height:17px;background:linear-gradient(#d84a38,#b02818 45%,#8a1a10);border-right:1px solid #701a10;box-sizing:border-box"></div>
<div class="t" style="left:8px;top:825px;font-size:13px;color:#111;letter-spacing:-0.2px;font-size:13.5px">HAL</div>
<div class="t" style="left:102px;top:825px;font-size:13px;color:#111;letter-spacing:-0.1px;font-size:13.5px">NYSE</div>
<div class="t" style="right:1227px;top:825px;font-size:13px;color:#111;letter-spacing:-0.5px;font-size:13.5px">700</div>
<div class="t" style="right:1157px;top:825px;font-size:13px;color:#111;letter-spacing:-0.5px;font-size:13.5px">71.2000</div>
<div class="t" style="right:1087px;top:825px;font-size:13px;color:#111;letter-spacing:-0.5px;font-size:13.5px">72.0000</div>
<div class="t" style="right:1027px;top:825px;font-size:13px;color:#111;letter-spacing:-0.5px;font-size:13.5px">5,000</div>
<div class="t" style="right:957px;top:825px;font-size:13px;color:#111;letter-spacing:-0.5px;font-size:13.5px">71.3000</div>
<div class="t" style="right:898px;top:825px;font-size:13px;color:#111;letter-spacing:-0.5px;font-size:13.5px">50</div>
<div class="t" style="right:827px;top:825px;font-size:13px;color:#fff;letter-spacing:-0.5px;font-size:13.5px">-1.3400</div>
<div class="t" style="right:747px;top:825px;font-size:13px;color:#fff;letter-spacing:-0.5px;font-size:13.5px">-1.84%</div>
<div class="t" style="right:677px;top:825px;font-size:13px;color:#111;letter-spacing:-0.5px;font-size:13.5px">72.7800</div>
<div class="t" style="right:607px;top:825px;font-size:13px;color:#111;letter-spacing:-0.5px;font-size:13.5px">71.2100</div>
<div class="t" style="right:523px;top:825px;font-size:13px;color:#111;letter-spacing:-0.5px;font-size:13.5px">74.3300</div>
<div class="a" style="left:933px;top:670px;width:12px;height:169px;background:#ececef;border-left:1px solid #dadade;box-sizing:border-box"></div>
<div class="a" style="left:934px;top:670px;width:11px;height:16px;background:#f4f4f6"></div>
<svg class="a" style="left:936px;top:674px;" width="8" height="8" viewBox="0 0 8 8"><rect x="0.5" y="0.5" width="7" height="7" fill="#fff" stroke="#333"/><path d="M0 3H8M3 3V8" stroke="#333"/></svg>
<svg class="a" style="left:934px;top:692px;" width="10" height="6" viewBox="0 0 10 6"><path d="M0 5.5L5 0.5L10 5.5Z" fill="#8a929c"/></svg>
<div class="a" style="left:935px;top:708px;width:9px;height:24px;background:#d0d0d4"></div>
<svg class="a" style="left:934px;top:826px;" width="10" height="6" viewBox="0 0 10 6"><path d="M0 0.5L5 5.5L10 0.5Z" fill="#8a929c"/></svg>
<div class="a" style="left:3px;top:839px;width:942px;height:12px;background:#ececef"></div>
<svg class="a" style="left:9px;top:841px;" width="6" height="9" viewBox="0 0 6 9"><path d="M5.5 0L0.5 4.5L5.5 9Z" fill="#8a929c"/></svg>
<div class="a" style="left:24px;top:840px;width:826px;height:10px;background:#d2d2d6"></div>
<svg class="a" style="left:922px;top:841px;" width="6" height="9" viewBox="0 0 6 9"><path d="M0.5 0L5.5 4.5L0.5 9Z" fill="#8a929c"/></svg>
<div class="a" style="left:945px;top:645px;width:1px;height:207px;background:#b0b0b6"></div>
<div class="a" style="left:950px;top:647px;width:487px;height:205px;border-left:1px solid #b8bcc4;border-top:1px solid #c0c4cc;box-sizing:border-box;background:#eeeef2"></div>
<div class="a" style="left:951px;top:648px;width:66px;height:22px;background:linear-gradient(#f4f4f6,#fff);border:1px solid #c8ccd4;border-bottom:none;border-radius:5px 5px 0 0;box-sizing:border-box"></div>
<svg class="a" style="left:1002px;top:654px;" width="10" height="10" viewBox="0 0 10 10"><path d="M1 1L9 9M9 1L1 9" stroke="#777" stroke-width="3"/><path d="M1 1L9 9M9 1L1 9" stroke="#fff" stroke-width="1.4"/></svg>
<div class="t" style="left:954px;top:654px;font-size:12px;color:#111;">andreas</div>
<svg class="a" style="left:1021px;top:652px;" width="17" height="13" viewBox="0 0 17 13"><path d="M1 12L2 6H12V12Z" fill="#f4f4f4" stroke="#999"/><path d="M0.5 12.5H15" stroke="#888"/><path d="M12 0V8M8 4H16" stroke="#2aaa2a" stroke-width="2.4"/></svg>
<div class="a" style="left:1153px;top:648px;width:22px;height:21px;background:#c6c6ca"></div>
<svg class="a" style="left:1156px;top:651px;" width="16" height="16" viewBox="0 0 16 16"><path d="M1 5H14M10 1L14 5L10 9M15 11H2M6 7L2 11L6 15" stroke="#d89a20" stroke-width="1.8" fill="none"/></svg>
<svg class="a" style="left:1181px;top:652px;" width="15" height="13" viewBox="0 0 15 13"><path d="M4 1.5H15M4 6.5H15M4 11.5H15" stroke="#333"/><rect x="0" y="0.5" width="2" height="2" fill="#333"/><rect x="0" y="5.5" width="2" height="2" fill="#333"/><rect x="0" y="10.5" width="2" height="2" fill="#333"/></svg>
<svg class="a" style="left:1205px;top:650px;" width="16" height="17" viewBox="0 0 16 17"><path d="M3 0V15M1 12L3 15L5 12" stroke="#333" fill="none"/><text x="8" y="7" font-size="8" fill="#2a8a2a" font-family="Liberation Sans" font-weight="bold">a</text><text x="8" y="16" font-size="9" fill="#8a2aaa" font-family="Liberation Sans" font-weight="bold">z</text></svg>
<div class="a" style="left:1229px;top:650px;width:1px;height:17px;background:repeating-linear-gradient(#9a9a9a 0 1px,transparent 1px 3px)"></div>
<svg class="a" style="left:1237px;top:652px;" width="14" height="14" viewBox="0 0 14 14"><path d="M7 0V14M0 7H14" stroke="#8ad040" stroke-width="3.5"/></svg>
<svg class="a" style="left:1259px;top:651px;" width="16" height="16" viewBox="0 0 16 16"><circle cx="6" cy="6" r="4.5" fill="#bfe0fa" stroke="#3b8ad8" stroke-width="1.4"/><path d="M9 9L14 14" stroke="#999" stroke-width="2"/></svg>
<svg class="a" style="left:1284px;top:651px;" width="16" height="17" viewBox="0 0 16 17"><ellipse cx="6" cy="3" rx="5.5" ry="2.5" fill="#eee" stroke="#999"/><path d="M0.5 3V13Q6 16 11.5 13V3" fill="#e6e6e6" stroke="#999"/><circle cx="12" cy="13" r="3.8" fill="#2aa02a"/><path d="M12 11V15M10 13H14" stroke="#fff" stroke-width="1.2"/></svg>
<div class="a" style="left:1307px;top:650px;width:1px;height:17px;background:repeating-linear-gradient(#9a9a9a 0 1px,transparent 1px 3px)"></div>
<svg class="a" style="left:1314px;top:650px;" width="17" height="17" viewBox="0 0 17 17"><rect x="5" y="0.5" width="11" height="10" fill="#fff" stroke="#5a8ad8"/><path d="M7 3H14M7 6H14" stroke="#5a8ad8"/><path d="M0.5 8H6L7 10H14V16H0.5Z" fill="#f4c040" stroke="#c89020"/></svg>
<svg class="a" style="left:1339px;top:650px;" width="17" height="17" viewBox="0 0 17 17"><rect x="0.5" y="2.5" width="13" height="13" fill="#fff" stroke="#5a8ad8"/><path d="M2 6H12M2 9H12" stroke="#aac"/><path d="M5 16L7 11L14 3L16 5L9 13Z" fill="#f2c040" stroke="#c07020" stroke-width=".8"/></svg>
<svg class="a" style="left:1364px;top:650px;" width="17" height="17" viewBox="0 0 17 17"><rect x="0.5" y="1.5" width="13" height="13" fill="#fff" stroke="#5a8ad8"/><path d="M1 5H13M1 9H13M5 2V14M9 2V14" stroke="#aac"/><circle cx="13" cy="13" r="3.8" fill="#2aa02a"/><path d="M13 11V15M11 13H15" stroke="#fff" stroke-width="1.2"/></svg>
<div class="a" style="left:1387px;top:650px;width:1px;height:17px;background:repeating-linear-gradient(#9a9a9a 0 1px,transparent 1px 3px)"></div>
<svg class="a" style="left:1395px;top:651px;" width="15" height="14" viewBox="0 0 15 14"><rect x="0.5" y="3.5" width="11" height="10" fill="#fff" stroke="#3a7ac8"/><rect x="0.5" y="3.5" width="11" height="2.5" fill="#3a7ac8"/><path d="M7 6L13 0M9 0H13V4" stroke="#2a8ae8" stroke-width="1.8" fill="none"/></svg>
<div class="a" style="left:1420px;top:653px;width:12px;height:10px;border:1px solid #111;border-top-width:2px;box-sizing:border-box;background:#fff"></div>
<div class="a" style="left:662px;top:648px;width:22px;height:21px;background:#c6c6ca"></div>
<svg class="a" style="left:665px;top:651px;" width="16" height="16" viewBox="0 0 16 16"><path d="M1 5H14M10 1L14 5L10 9M15 11H2M6 7L2 11L6 15" stroke="#d89a20" stroke-width="1.8" fill="none"/></svg>
<svg class="a" style="left:690px;top:652px;" width="15" height="13" viewBox="0 0 15 13"><path d="M4 1.5H15M4 6.5H15M4 11.5H15" stroke="#333"/><rect x="0" y="0.5" width="2" height="2" fill="#333"/><rect x="0" y="5.5" width="2" height="2" fill="#333"/><rect x="0" y="10.5" width="2" height="2" fill="#333"/></svg>
<svg class="a" style="left:714px;top:650px;" width="16" height="17" viewBox="0 0 16 17"><path d="M3 0V15M1 12L3 15L5 12" stroke="#333" fill="none"/><text x="8" y="7" font-size="8" fill="#2a8a2a" font-family="Liberation Sans" font-weight="bold">a</text><text x="8" y="16" font-size="9" fill="#8a2aaa" font-family="Liberation Sans" font-weight="bold">z</text></svg>
<div class="a" style="left:738px;top:650px;width:1px;height:17px;background:repeating-linear-gradient(#9a9a9a 0 1px,transparent 1px 3px)"></div>
<svg class="a" style="left:746px;top:652px;" width="14" height="14" viewBox="0 0 14 14"><path d="M7 0V14M0 7H14" stroke="#8ad040" stroke-width="3.5"/></svg>
<svg class="a" style="left:768px;top:651px;" width="16" height="16" viewBox="0 0 16 16"><circle cx="6" cy="6" r="4.5" fill="#bfe0fa" stroke="#3b8ad8" stroke-width="1.4"/><path d="M9 9L14 14" stroke="#999" stroke-width="2"/></svg>
<svg class="a" style="left:793px;top:651px;" width="16" height="17" viewBox="0 0 16 17"><ellipse cx="6" cy="3" rx="5.5" ry="2.5" fill="#eee" stroke="#999"/><path d="M0.5 3V13Q6 16 11.5 13V3" fill="#e6e6e6" stroke="#999"/><circle cx="12" cy="13" r="3.8" fill="#2aa02a"/><path d="M12 11V15M10 13H14" stroke="#fff" stroke-width="1.2"/></svg>
<div class="a" style="left:816px;top:650px;width:1px;height:17px;background:repeating-linear-gradient(#9a9a9a 0 1px,transparent 1px 3px)"></div>
<svg class="a" style="left:823px;top:650px;" width="17" height="17" viewBox="0 0 17 17"><rect x="5" y="0.5" width="11" height="10" fill="#fff" stroke="#5a8ad8"/><path d="M7 3H14M7 6H14" stroke="#5a8ad8"/><path d="M0.5 8H6L7 10H14V16H0.5Z" fill="#f4c040" stroke="#c89020"/></svg>
<svg class="a" style="left:848px;top:650px;" width="17" height="17" viewBox="0 0 17 17"><rect x="0.5" y="2.5" width="13" height="13" fill="#fff" stroke="#5a8ad8"/><path d="M2 6H12M2 9H12" stroke="#aac"/><path d="M5 16L7 11L14 3L16 5L9 13Z" fill="#f2c040" stroke="#c07020" stroke-width=".8"/></svg>
<svg class="a" style="left:873px;top:650px;" width="17" height="17" viewBox="0 0 17 17"><rect x="0.5" y="1.5" width="13" height="13" fill="#fff" stroke="#5a8ad8"/><path d="M1 5H13M1 9H13M5 2V14M9 2V14" stroke="#aac"/><circle cx="13" cy="13" r="3.8" fill="#2aa02a"/><path d="M13 11V15M11 13H15" stroke="#fff" stroke-width="1.2"/></svg>
<div class="a" style="left:896px;top:650px;width:1px;height:17px;background:repeating-linear-gradient(#9a9a9a 0 1px,transparent 1px 3px)"></div>
<svg class="a" style="left:904px;top:651px;" width="15" height="14" viewBox="0 0 15 14"><rect x="0.5" y="3.5" width="11" height="10" fill="#fff" stroke="#3a7ac8"/><rect x="0.5" y="3.5" width="11" height="2.5" fill="#3a7ac8"/><path d="M7 6L13 0M9 0H13V4" stroke="#2a8ae8" stroke-width="1.8" fill="none"/></svg>
<div class="a" style="left:929px;top:653px;width:12px;height:10px;border:1px solid #111;border-top-width:2px;box-sizing:border-box;background:#fff"></div>
<div class="a" style="left:0;top:0;width:1440px;height:851px;overflow:hidden">
<div class="a" style="left:955px;top:674px;width:139px;height:102px;background:#f2f2f4;border:1px solid #8a8a90;border-radius:6px;box-sizing:border-box"></div>
<div class="a" style="left:956px;top:675px;width:68px;height:15px;background:linear-gradient(#505050,#0a0a0a 55%,#000);border-radius:5px 0 0 0"></div>
<div class="a" style="left:1023px;top:675px;width:70px;height:15px;background:linear-gradient(#fafafa,#cfcfd3);border-radius:0 5px 0 0"></div>
<div class="t" style="left:959px;top:677px;font-size:12px;color:#fff;font-weight:bold;letter-spacing:-0.5px">INDU.X</div>
<div class="t" style="right:364px;top:678px;font-size:11px;color:#111;letter-spacing:0px;font-size:10.5px">3:00:00</div>
<svg class="a" style="left:1080px;top:679px;" width="9" height="8" viewBox="0 0 9 8"><path d="M1 0.5L8 7.5M8 0.5L1 7.5" stroke="#111" stroke-width="1.6"/></svg>
<svg class="a" style="left:957px;top:692px;" width="136" height="46" viewBox="0 0 136 46"><defs><linearGradient id="sb" x1="0" x2="0" y1="0" y2="1"><stop offset="0" stop-color="#5a5a5c"/><stop offset="1" stop-color="#4a4a4c"/></linearGradient><linearGradient id="sh" x1="0" x2="0" y1="0" y2="1"><stop offset="0" stop-color="#7c7c7e"/><stop offset="1" stop-color="#626264"/></linearGradient></defs><path d="M4 0.5H61Q64.5 0.5 64.5 4V24Q64.5 27.5 61 27.5H36Q32.5 27.5 32.5 31V41Q32.5 44.5 29 44.5H4Q0.5 44.5 0.5 41V4Q0.5 0.5 4 0.5Z" fill="url(#sb)" stroke="#3a3a3c"/><path d="M4 1H61Q64 1 64 4V6Q33 16 1 6V4Q1 1 4 1Z" fill="url(#sh)"/><path d="M71 0.5H131Q134.5 0.5 134.5 4V41Q134.5 44.5 131 44.5H105Q101.5 44.5 101.5 41V31Q101.5 27.5 98 27.5H71Q67.5 27.5 67.5 24V4Q67.5 0.5 71 0.5Z" fill="url(#sb)" stroke="#3a3a3c"/><path d="M71 1H131Q134 1 134 4V6Q101 16 68 6V4Q68 1 71 1Z" fill="url(#sh)"/><path d="M5 28.5H27M110 28.5H133" stroke="#3e3e40"/></svg>
<div class="t" style="left:963px;top:724px;font-size:12px;color:#f0f0f0;font-weight:bold;letter-spacing:0px">Sell</div>
<div class="t" style="left:1064px;top:724px;font-size:12px;color:#f0f0f0;font-weight:bold;letter-spacing:0px">Buy</div>
<div class="a" style="left:992px;top:722px;width:47px;height:15px;background:#fdfdfd;border:1px solid #e4e4e8;box-sizing:border-box"></div>
<div class="t" style="right:416px;top:725px;font-size:11px;color:#111;">1</div>
<svg class="a" style="left:1030px;top:726px;" width="5" height="8" viewBox="0 0 5 8"><path d="M2.5 0L5 4L2.5 8L0 4Z" fill="#111"/></svg>
<svg class="a" style="left:1043px;top:724px;" width="10" height="10" viewBox="0 0 10 10"><path d="M0 0.5H8M0 2.5H8M0 4.5H8M0 6.5H5" stroke="#333"/><path d="M5 7H10L7.5 9.5Z" fill="#333"/></svg>
<div class="a" style="left:979px;top:739px;width:91px;height:17px;background:linear-gradient(#7a7a7c,#505052 50%,#3a3a3c);border:1px solid #2a2a2a;border-radius:3px;box-sizing:border-box"></div>
<div class="t" style="left:824.5px;width:400px;text-align:center;top:742px;font-size:11px;color:#eee;letter-spacing:0px;font-size:10.5px">P:0.00</div>
<div class="a" style="left:1006px;top:758px;width:37px;height:17px;background:linear-gradient(#7a7a7c,#505052 50%,#3a3a3c);border:1px solid #2a2a2a;border-radius:3px;box-sizing:border-box"></div>
<div class="t" style="left:824.5px;width:400px;text-align:center;top:761px;font-size:11px;color:#eee;letter-spacing:0px;font-size:10.5px">0.0</div>
<div class="t" style="left:961px;top:762px;font-size:10px;color:#111;letter-spacing:-0.2px;font-size:9.5px">L:0.00</div>
<div class="t" style="right:351px;top:762px;font-size:10px;color:#111;letter-spacing:-0.2px;font-size:9.5px">H:0.00</div>
<div class="a" style="left:1098px;top:674px;width:139px;height:102px;background:#f2f2f4;border:1px solid #8a8a90;border-radius:6px;box-sizing:border-box"></div>
<div class="a" style="left:1099px;top:675px;width:68px;height:15px;background:linear-gradient(#505050,#0a0a0a 55%,#000);border-radius:5px 0 0 0"></div>
<div class="a" style="left:1166px;top:675px;width:70px;height:15px;background:linear-gradient(#fafafa,#cfcfd3);border-radius:0 5px 0 0"></div>
<div class="t" style="left:1102px;top:677px;font-size:12px;color:#fff;font-weight:bold;letter-spacing:-0.5px">TRAN.X</div>
<div class="t" style="right:221px;top:678px;font-size:11px;color:#111;letter-spacing:0px;font-size:10.5px">3:00:00</div>
<svg class="a" style="left:1223px;top:679px;" width="9" height="8" viewBox="0 0 9 8"><path d="M1 0.5L8 7.5M8 0.5L1 7.5" stroke="#111" stroke-width="1.6"/></svg>
<svg class="a" style="left:1100px;top:692px;" width="136" height="46" viewBox="0 0 136 46"><defs><linearGradient id="sb" x1="0" x2="0" y1="0" y2="1"><stop offset="0" stop-color="#5a5a5c"/><stop offset="1" stop-color="#4a4a4c"/></linearGradient><linearGradient id="sh" x1="0" x2="0" y1="0" y2="1"><stop offset="0" stop-color="#7c7c7e"/><stop offset="1" stop-color="#626264"/></linearGradient></defs><path d="M4 0.5H61Q64.5 0.5 64.5 4V24Q64.5 27.5 61 27.5H36Q32.5 27.5 32.5 31V41Q32.5 44.5 29 44.5H4Q0.5 44.5 0.5 41V4Q0.5 0.5 4 0.5Z" fill="url(#sb)" stroke="#3a3a3c"/><path d="M4 1H61Q64 1 64 4V6Q33 16 1 6V4Q1 1 4 1Z" fill="url(#sh)"/><path d="M71 0.5H131Q134.5 0.5 134.5 4V41Q134.5 44.5 131 44.5H105Q101.5 44.5 101.5 41V31Q101.5 27.5 98 27.5H71Q67.5 27.5 67.5 24V4Q67.5 0.5 71 0.5Z" fill="url(#sb)" stroke="#3a3a3c"/><path d="M71 1H131Q134 1 134 4V6Q101 16 68 6V4Q68 1 71 1Z" fill="url(#sh)"/><path d="M5 28.5H27M110 28.5H133" stroke="#3e3e40"/></svg>
<div class="t" style="left:1106px;top:724px;font-size:12px;color:#f0f0f0;font-weight:bold;letter-spacing:0px">Sell</div>
<div class="t" style="left:1207px;top:724px;font-size:12px;color:#f0f0f0;font-weight:bold;letter-spacing:0px">Buy</div>
<div class="a" style="left:1135px;top:722px;width:47px;height:15px;background:#fdfdfd;border:1px solid #e4e4e8;box-sizing:border-box"></div>
<div class="t" style="right:273px;top:725px;font-size:11px;color:#111;">1</div>
<svg class="a" style="left:1173px;top:726px;" width="5" height="8" viewBox="0 0 5 8"><path d="M2.5 0L5 4L2.5 8L0 4Z" fill="#111"/></svg>
<svg class="a" style="left:1186px;top:724px;" width="10" height="10" viewBox="0 0 10 10"><path d="M0 0.5H8M0 2.5H8M0 4.5H8M0 6.5H5" stroke="#333"/><path d="M5 7H10L7.5 9.5Z" fill="#333"/></svg>
<div class="a" style="left:1122px;top:739px;width:91px;height:17px;background:linear-gradient(#7a7a7c,#505052 50%,#3a3a3c);border:1px solid #2a2a2a;border-radius:3px;box-sizing:border-box"></div>
<div class="t" style="left:967.5px;width:400px;text-align:center;top:742px;font-size:11px;color:#eee;letter-spacing:0px;font-size:10.5px">P:0.00</div>
<div class="a" style="left:1149px;top:758px;width:37px;height:17px;background:linear-gradient(#7a7a7c,#505052 50%,#3a3a3c);border:1px solid #2a2a2a;border-radius:3px;box-sizing:border-box"></div>
<div class="t" style="left:967.5px;width:400px;text-align:center;top:761px;font-size:11px;color:#eee;letter-spacing:0px;font-size:10.5px">0.0</div>
<div class="t" style="left:1104px;top:762px;font-size:10px;color:#111;letter-spacing:-0.2px;font-size:9.5px">L:0.00</div>
<div class="t" style="right:208px;top:762px;font-size:10px;color:#111;letter-spacing:-0.2px;font-size:9.5px">H:0.00</div>
<div class="a" style="left:1241px;top:674px;width:139px;height:102px;background:#f2f2f4;border:1px solid #8a8a90;border-radius:6px;box-sizing:border-box"></div>
<div class="a" style="left:1242px;top:675px;width:68px;height:15px;background:linear-gradient(#505050,#0a0a0a 55%,#000);border-radius:5px 0 0 0"></div>
<div class="a" style="left:1309px;top:675px;width:70px;height:15px;background:linear-gradient(#fafafa,#cfcfd3);border-radius:0 5px 0 0"></div>
<div class="t" style="left:1245px;top:677px;font-size:12px;color:#fff;font-weight:bold;letter-spacing:-0.5px">COMPX.X</div>
<div class="t" style="right:78px;top:678px;font-size:11px;color:#111;letter-spacing:0px;font-size:10.5px">1:16:00</div>
<svg class="a" style="left:1366px;top:679px;" width="9" height="8" viewBox="0 0 9 8"><path d="M1 0.5L8 7.5M8 0.5L1 7.5" stroke="#111" stroke-width="1.6"/></svg>
<svg class="a" style="left:1243px;top:692px;" width="136" height="46" viewBox="0 0 136 46"><defs><linearGradient id="sb" x1="0" x2="0" y1="0" y2="1"><stop offset="0" stop-color="#5a5a5c"/><stop offset="1" stop-color="#4a4a4c"/></linearGradient><linearGradient id="sh" x1="0" x2="0" y1="0" y2="1"><stop offset="0" stop-color="#7c7c7e"/><stop offset="1" stop-color="#626264"/></linearGradient></defs><path d="M4 0.5H61Q64.5 0.5 64.5 4V24Q64.5 27.5 61 27.5H36Q32.5 27.5 32.5 31V41Q32.5 44.5 29 44.5H4Q0.5 44.5 0.5 41V4Q0.5 0.5 4 0.5Z" fill="url(#sb)" stroke="#3a3a3c"/><path d="M4 1H61Q64 1 64 4V6Q33 16 1 6V4Q1 1 4 1Z" fill="url(#sh)"/><path d="M71 0.5H131Q134.5 0.5 134.5 4V41Q134.5 44.5 131 44.5H105Q101.5 44.5 101.5 41V31Q101.5 27.5 98 27.5H71Q67.5 27.5 67.5 24V4Q67.5 0.5 71 0.5Z" fill="url(#sb)" stroke="#3a3a3c"/><path d="M71 1H131Q134 1 134 4V6Q101 16 68 6V4Q68 1 71 1Z" fill="url(#sh)"/><path d="M5 28.5H27M110 28.5H133" stroke="#3e3e40"/></svg>
<div class="t" style="left:1249px;top:724px;font-size:12px;color:#f0f0f0;font-weight:bold;letter-spacing:0px">Sell</div>
<div class="t" style="left:1350px;top:724px;font-size:12px;color:#f0f0f0;font-weight:bold;letter-spacing:0px">Buy</div>
<div class="a" style="left:1278px;top:722px;width:47px;height:15px;background:#fdfdfd;border:1px solid #e4e4e8;box-sizing:border-box"></div>
<div class="t" style="right:130px;top:725px;font-size:11px;color:#111;">1</div>
<svg class="a" style="left:1316px;top:726px;" width="5" height="8" viewBox="0 0 5 8"><path d="M2.5 0L5 4L2.5 8L0 4Z" fill="#111"/></svg>
<svg class="a" style="left:1329px;top:724px;" width="10" height="10" viewBox="0 0 10 10"><path d="M0 0.5H8M0 2.5H8M0 4.5H8M0 6.5H5" stroke="#333"/><path d="M5 7H10L7.5 9.5Z" fill="#333"/></svg>
<div class="a" style="left:1265px;top:739px;width:91px;height:17px;background:linear-gradient(#7a7a7c,#505052 50%,#3a3a3c);border:1px solid #2a2a2a;border-radius:3px;box-sizing:border-box"></div>
<div class="t" style="left:1273px;top:742px;font-size:11px;color:#eee;letter-spacing:0.1px;font-size:10.5px">P:4442.70000</div>
<svg class="a" style="left:1339px;top:744px;" width="11" height="7" viewBox="0 0 11 7"><path d="M0 6.5L5.5 0.5L11 6.5Z" fill="#111"/></svg>
<div class="a" style="left:1292px;top:758px;width:37px;height:17px;background:linear-gradient(#7a7a7c,#505052 50%,#3a3a3c);border:1px solid #2a2a2a;border-radius:3px;box-sizing:border-box"></div>
<div class="t" style="left:1110.5px;width:400px;text-align:center;top:761px;font-size:11px;color:#eee;letter-spacing:0px;font-size:10.5px">0.0</div>
<div class="t" style="left:1247px;top:762px;font-size:10px;color:#111;letter-spacing:-0.2px;font-size:9.5px">0.00000</div>
<div class="t" style="right:65px;top:762px;font-size:10px;color:#111;letter-spacing:-0.2px;font-size:9.5px">0.00000</div>
<div class="a" style="left:955px;top:781px;width:139px;height:102px;background:#f2f2f4;border:1px solid #8a8a90;border-radius:6px;box-sizing:border-box"></div>
<div class="a" style="left:956px;top:782px;width:68px;height:15px;background:linear-gradient(#505050,#0a0a0a 55%,#000);border-radius:5px 0 0 0"></div>
<div class="a" style="left:1023px;top:782px;width:70px;height:15px;background:linear-gradient(#fafafa,#cfcfd3);border-radius:0 5px 0 0"></div>
<div class="t" style="left:959px;top:784px;font-size:12px;color:#fff;font-weight:bold;letter-spacing:-0.5px">NDX.X</div>
<div class="t" style="right:364px;top:785px;font-size:11px;color:#111;letter-spacing:0px;font-size:10.5px">1:16:01</div>
<svg class="a" style="left:1080px;top:786px;" width="9" height="8" viewBox="0 0 9 8"><path d="M1 0.5L8 7.5M8 0.5L1 7.5" stroke="#111" stroke-width="1.6"/></svg>
<svg class="a" style="left:957px;top:799px;" width="136" height="46" viewBox="0 0 136 46"><defs><linearGradient id="sb" x1="0" x2="0" y1="0" y2="1"><stop offset="0" stop-color="#5a5a5c"/><stop offset="1" stop-color="#4a4a4c"/></linearGradient><linearGradient id="sh" x1="0" x2="0" y1="0" y2="1"><stop offset="0" stop-color="#7c7c7e"/><stop offset="1" stop-color="#626264"/></linearGradient></defs><path d="M4 0.5H61Q64.5 0.5 64.5 4V24Q64.5 27.5 61 27.5H36Q32.5 27.5 32.5 31V41Q32.5 44.5 29 44.5H4Q0.5 44.5 0.5 41V4Q0.5 0.5 4 0.5Z" fill="url(#sb)" stroke="#3a3a3c"/><path d="M4 1H61Q64 1 64 4V6Q33 16 1 6V4Q1 1 4 1Z" fill="url(#sh)"/><path d="M71 0.5H131Q134.5 0.5 134.5 4V41Q134.5 44.5 131 44.5H105Q101.5 44.5 101.5 41V31Q101.5 27.5 98 27.5H71Q67.5 27.5 67.5 24V4Q67.5 0.5 71 0.5Z" fill="url(#sb)" stroke="#3a3a3c"/><path d="M71 1H131Q134 1 134 4V6Q101 16 68 6V4Q68 1 71 1Z" fill="url(#sh)"/><path d="M5 28.5H27M110 28.5H133" stroke="#3e3e40"/></svg>
<div class="t" style="left:963px;top:831px;font-size:12px;color:#f0f0f0;font-weight:bold;letter-spacing:0px">Sell</div>
<div class="t" style="left:1064px;top:831px;font-size:12px;color:#f0f0f0;font-weight:bold;letter-spacing:0px">Buy</div>
<div class="a" style="left:992px;top:829px;width:47px;height:15px;background:#fdfdfd;border:1px solid #e4e4e8;box-sizing:border-box"></div>
<div class="t" style="right:416px;top:832px;font-size:11px;color:#111;">1</div>
<svg class="a" style="left:1030px;top:833px;" width="5" height="8" viewBox="0 0 5 8"><path d="M2.5 0L5 4L2.5 8L0 4Z" fill="#111"/></svg>
<svg class="a" style="left:1043px;top:831px;" width="10" height="10" viewBox="0 0 10 10"><path d="M0 0.5H8M0 2.5H8M0 4.5H8M0 6.5H5" stroke="#333"/><path d="M5 7H10L7.5 9.5Z" fill="#333"/></svg><div class="a" style="left:979px;top:846px;width:91px;height:4px;background:#555;border-radius:3px 3px 0 0"></div>
<div class="a" style="left:1098px;top:781px;width:139px;height:102px;background:#f2f2f4;border:1px solid #8a8a90;border-radius:6px;box-sizing:border-box"></div>
<div class="a" style="left:1099px;top:782px;width:68px;height:15px;background:linear-gradient(#505050,#0a0a0a 55%,#000);border-radius:5px 0 0 0"></div>
<div class="a" style="left:1166px;top:782px;width:70px;height:15px;background:linear-gradient(#fafafa,#cfcfd3);border-radius:0 5px 0 0"></div>
<div class="t" style="left:1102px;top:784px;font-size:12px;color:#fff;font-weight:bold;letter-spacing:-0.5px">SPX.XO</div>
<div class="t" style="right:221px;top:785px;font-size:11px;color:#111;letter-spacing:0px;font-size:10.5px">3:00:00</div>
<svg class="a" style="left:1223px;top:786px;" width="9" height="8" viewBox="0 0 9 8"><path d="M1 0.5L8 7.5M8 0.5L1 7.5" stroke="#111" stroke-width="1.6"/></svg>
<svg class="a" style="left:1100px;top:799px;" width="136" height="46" viewBox="0 0 136 46"><defs><linearGradient id="sb" x1="0" x2="0" y1="0" y2="1"><stop offset="0" stop-color="#5a5a5c"/><stop offset="1" stop-color="#4a4a4c"/></linearGradient><linearGradient id="sh" x1="0" x2="0" y1="0" y2="1"><stop offset="0" stop-color="#7c7c7e"/><stop offset="1" stop-color="#626264"/></linearGradient></defs><path d="M4 0.5H61Q64.5 0.5 64.5 4V24Q64.5 27.5 61 27.5H36Q32.5 27.5 32.5 31V41Q32.5 44.5 29 44.5H4Q0.5 44.5 0.5 41V4Q0.5 0.5 4 0.5Z" fill="url(#sb)" stroke="#3a3a3c"/><path d="M4 1H61Q64 1 64 4V6Q33 16 1 6V4Q1 1 4 1Z" fill="url(#sh)"/><path d="M71 0.5H131Q134.5 0.5 134.5 4V41Q134.5 44.5 131 44.5H105Q101.5 44.5 101.5 41V31Q101.5 27.5 98 27.5H71Q67.5 27.5 67.5 24V4Q67.5 0.5 71 0.5Z" fill="url(#sb)" stroke="#3a3a3c"/><path d="M71 1H131Q134 1 134 4V6Q101 16 68 6V4Q68 1 71 1Z" fill="url(#sh)"/><path d="M5 28.5H27M110 28.5H133" stroke="#3e3e40"/></svg>
<div class="t" style="left:1106px;top:831px;font-size:12px;color:#f0f0f0;font-weight:bold;letter-spacing:0px">Sell</div>
<div class="t" style="left:1207px;top:831px;font-size:12px;color:#f0f0f0;font-weight:bold;letter-spacing:0px">Buy</div>
<div class="a" style="left:1135px;top:829px;width:47px;height:15px;background:#fdfdfd;border:1px solid #e4e4e8;box-sizing:border-box"></div>
<div class="t" style="right:273px;top:832px;font-size:11px;color:#111;">1</div>
<svg class="a" style="left:1173px;top:833px;" width="5" height="8" viewBox="0 0 5 8"><path d="M2.5 0L5 4L2.5 8L0 4Z" fill="#111"/></svg>
<svg class="a" style="left:1186px;top:831px;" width="10" height="10" viewBox="0 0 10 10"><path d="M0 0.5H8M0 2.5H8M0 4.5H8M0 6.5H5" stroke="#333"/><path d="M5 7H10L7.5 9.5Z" fill="#333"/></svg><div class="a" style="left:1122px;top:846px;width:91px;height:4px;background:#555;border-radius:3px 3px 0 0"></div>
<div class="a" style="left:1241px;top:781px;width:139px;height:102px;background:#f2f2f4;border:1px solid #8a8a90;border-radius:6px;box-sizing:border-box"></div>
<div class="a" style="left:1242px;top:782px;width:68px;height:15px;background:linear-gradient(#505050,#0a0a0a 55%,#000);border-radius:5px 0 0 0"></div>
<div class="a" style="left:1309px;top:782px;width:70px;height:15px;background:linear-gradient(#fafafa,#cfcfd3);border-radius:0 5px 0 0"></div>
<div class="t" style="left:1245px;top:784px;font-size:12px;color:#fff;font-weight:bold;letter-spacing:-0.5px">RUT.XO</div>
<div class="t" style="right:78px;top:785px;font-size:11px;color:#111;letter-spacing:0px;font-size:10.5px">3:00:00</div>
<svg class="a" style="left:1366px;top:786px;" width="9" height="8" viewBox="0 0 9 8"><path d="M1 0.5L8 7.5M8 0.5L1 7.5" stroke="#111" stroke-width="1.6"/></svg>
<svg class="a" style="left:1243px;top:799px;" width="136" height="46" viewBox="0 0 136 46"><defs><linearGradient id="sb" x1="0" x2="0" y1="0" y2="1"><stop offset="0" stop-color="#5a5a5c"/><stop offset="1" stop-color="#4a4a4c"/></linearGradient><linearGradient id="sh" x1="0" x2="0" y1="0" y2="1"><stop offset="0" stop-color="#7c7c7e"/><stop offset="1" stop-color="#626264"/></linearGradient></defs><path d="M4 0.5H61Q64.5 0.5 64.5 4V24Q64.5 27.5 61 27.5H36Q32.5 27.5 32.5 31V41Q32.5 44.5 29 44.5H4Q0.5 44.5 0.5 41V4Q0.5 0.5 4 0.5Z" fill="url(#sb)" stroke="#3a3a3c"/><path d="M4 1H61Q64 1 64 4V6Q33 16 1 6V4Q1 1 4 1Z" fill="url(#sh)"/><path d="M71 0.5H131Q134.5 0.5 134.5 4V41Q134.5 44.5 131 44.5H105Q101.5 44.5 101.5 41V31Q101.5 27.5 98 27.5H71Q67.5 27.5 67.5 24V4Q67.5 0.5 71 0.5Z" fill="url(#sb)" stroke="#3a3a3c"/><path d="M71 1H131Q134 1 134 4V6Q101 16 68 6V4Q68 1 71 1Z" fill="url(#sh)"/><path d="M5 28.5H27M110 28.5H133" stroke="#3e3e40"/></svg>
<div class="t" style="left:1249px;top:831px;font-size:12px;color:#f0f0f0;font-weight:bold;letter-spacing:0px">Sell</div>
<div class="t" style="left:1350px;top:831px;font-size:12px;color:#f0f0f0;font-weight:bold;letter-spacing:0px">Buy</div>
<div class="a" style="left:1278px;top:829px;width:47px;height:15px;background:#fdfdfd;border:1px solid #e4e4e8;box-sizing:border-box"></div>
<div class="t" style="right:130px;top:832px;font-size:11px;color:#111;">1</div>
<svg class="a" style="left:1316px;top:833px;" width="5" height="8" viewBox="0 0 5 8"><path d="M2.5 0L5 4L2.5 8L0 4Z" fill="#111"/></svg>
<svg class="a" style="left:1329px;top:831px;" width="10" height="10" viewBox="0 0 10 10"><path d="M0 0.5H8M0 2.5H8M0 4.5H8M0 6.5H5" stroke="#333"/><path d="M5 7H10L7.5 9.5Z" fill="#333"/></svg><div class="a" style="left:1265px;top:846px;width:91px;height:4px;background:#555;border-radius:3px 3px 0 0"></div>
</div>
<div class="a" style="left:1423px;top:675px;width:14px;height:172px;background:#ececef"></div>
<svg class="a" style="left:1427px;top:680px;" width="10" height="6" viewBox="0 0 10 6"><path d="M0 5.5L5 0.5L10 5.5Z" fill="#8a929c"/></svg>
<div class="a" style="left:1427px;top:691px;width:9px;height:80px;background:#d0d0d4"></div>
<svg class="a" style="left:1427px;top:836px;" width="10" height="6" viewBox="0 0 10 6"><path d="M0 0.5L5 5.5L10 0.5Z" fill="#8a929c"/></svg>
<div class="a" style="left:3px;top:851px;width:1435px;height:1px;background:#b0b0b6"></div>
<div class="a" style="left:3px;top:852px;width:1435px;height:24px;background:#eeeef2"></div>
<div class="a" style="left:3px;top:852px;width:79px;height:24px;background:#c9cdd6"></div>
<svg class="a" style="left:8px;top:859px;" width="15" height="15" viewBox="0 0 15 15"><path d="M1 0V14H15" stroke="#2a5ab8" stroke-width="1.3" fill="none"/><path d="M2 11Q6 2 9 5T14 4" stroke="#d04040" fill="none" stroke-width="1.3"/><path d="M2 6Q6 12 9 9T14 12" stroke="#30a030" fill="none" stroke-width="1.3"/><path d="M2 9L14 6" stroke="#4a7ad8" stroke-width="1.2"/></svg>
<div class="t" style="left:26px;top:859px;font-size:12px;color:#111;letter-spacing:0.5px">Home</div>
<svg class="a" style="left:67px;top:860px;" width="10" height="10" viewBox="0 0 10 10"><path d="M1 1L9 9M9 1L1 9" stroke="#777" stroke-width="3"/><path d="M1 1L9 9M9 1L1 9" stroke="#fff" stroke-width="1.4"/></svg>
<svg class="a" style="left:88px;top:859px;" width="15" height="15" viewBox="0 0 15 15"><path d="M1 0V14H15" stroke="#2a5ab8" stroke-width="1.3" fill="none"/><path d="M2 11Q6 2 9 5T14 4" stroke="#d04040" fill="none" stroke-width="1.3"/><path d="M2 6Q6 12 9 9T14 12" stroke="#30a030" fill="none" stroke-width="1.3"/><path d="M2 9L14 6" stroke="#4a7ad8" stroke-width="1.2"/></svg>
<div class="t" style="left:106px;top:859px;font-size:12px;color:#111;letter-spacing:0.5px">Charts</div>
<svg class="a" style="left:170px;top:858px;" width="15" height="15" viewBox="0 0 15 15"><circle cx="7.5" cy="4.5" r="4" fill="#333"/><path d="M0 15Q0 8 7.5 8Q15 8 15 15Z" fill="#333"/></svg>
<div class="t" style="left:188px;top:859px;font-size:12px;color:#111;letter-spacing:0.5px">Account</div>
<svg class="a" style="left:261px;top:858px;" width="16" height="16" viewBox="0 0 16 16"><circle cx="9" cy="7" r="5.5" fill="#f0f0f0" stroke="#666"/><path d="M9 4V10M6 7H12" stroke="#999"/><path d="M1 15V8M4 15V10" stroke="#555" stroke-width="1.5"/><path d="M13 11L16 15" stroke="#666" stroke-width="2"/></svg>
<div class="t" style="left:279px;top:859px;font-size:12px;color:#111;letter-spacing:0.5px">Scan</div>
<svg class="a" style="left:332px;top:858px;" width="16" height="16" viewBox="0 0 16 16"><rect x="0.5" y="2.5" width="14" height="11" fill="#eee" stroke="#555"/><path d="M3 4V12M6 4V12M9 4V12M12 4V12" stroke="#555" stroke-width="1.2"/><circle cx="12" cy="12" r="3.5" fill="#2aaa2a"/></svg>
<div class="t" style="left:351px;top:859px;font-size:12px;color:#111;letter-spacing:0.5px">Optimize</div>
<svg class="a" style="left:430px;top:858px;" width="16" height="16" viewBox="0 0 16 16"><path d="M1 9L9 1H15V7L7 15Z" fill="#f4f4f4" stroke="#777"/><circle cx="12" cy="4" r="1.5" fill="#777"/><path d="M5 9L9 5M7 11L11 7" stroke="#aaa"/></svg>
<div class="t" style="left:447px;top:859px;font-size:12px;color:#111;letter-spacing:0.5px">News</div>
<svg class="a" style="left:504px;top:856px;" width="17" height="17" viewBox="0 0 17 17"><rect x="0.5" y="3.5" width="13" height="13" fill="#f4f4f4" stroke="#888"/><path d="M1 7H13M5 7V16" stroke="#aaa"/><path d="M13 0V8M9 4H17" stroke="#2aaa2a" stroke-width="2.2"/></svg>
<svg class="a" style="left:1370px;top:857px;" width="16" height="16" viewBox="0 0 16 16"><rect x="0.5" y="1.5" width="13" height="13" fill="#fff" stroke="#999"/><path d="M2 5H12M2 8H12" stroke="#ccc"/><path d="M5 15L7 11L14 4L16 6L9 13Z" fill="#f2c040" stroke="#c07020" stroke-width=".8"/></svg>
<svg class="a" style="left:1393px;top:857px;" width="16" height="16" viewBox="0 0 16 16"><rect x="0.5" y="0.5" width="9" height="11" fill="#fff" stroke="#2a2a6a"/><rect x="5.5" y="4.5" width="9" height="11" fill="#fff" stroke="#2a2a6a"/><path d="M7 7H13M7 10H13M7 13H13" stroke="#2a2a6a"/></svg>
<svg class="a" style="left:1418px;top:857px;" width="15" height="16" viewBox="0 0 15 16"><circle cx="7.5" cy="8" r="5.5" fill="none" stroke="#aaa" stroke-width="3" stroke-dasharray="2.3 1.2"/><circle cx="7.5" cy="8" r="3.5" fill="#eee" stroke="#999"/></svg>
<div class="a" style="left:2px;top:876px;width:1436px;height:22px;background:#0a6fc6"></div>
<svg class="a" style="left:7px;top:879px;" width="16" height="17" viewBox="0 0 16 17"><path d="M3 8Q3 2 8 2T13 8" stroke="#cfe4f8" stroke-width="1.6" fill="none"/><path d="M5.5 8Q5.5 4.8 8 4.8T10.5 8" stroke="#cfe4f8" stroke-width="1.5" fill="none"/><path d="M8 7L4 16M8 7L12 16M5.5 12.5H10.5" stroke="#dde" stroke-width="1.5" fill="none"/></svg>
<svg class="a" style="left:28px;top:881px;" width="15" height="12" viewBox="0 0 15 12"><path d="M5 3Q1 3 1 6Q1 9 5 9H6M9 3H10Q14 3 14 6Q14 9 10 9H9" stroke="#ddd" stroke-width="2" fill="none"/><path d="M7.5 0V3M7.5 9V12M4 0L6 2M11 0L9 2" stroke="#7ac0ff"/></svg>
<svg class="a" style="left:47px;top:883px;" width="12" height="8" viewBox="0 0 12 8"><path d="M4 1.5Q1 1.5 1 4Q1 6.5 4 6.5H5M7 1.5H8Q11 1.5 11 4Q11 6.5 8 6.5H7M4 4H8" stroke="#ddd" stroke-width="1.5" fill="none"/></svg>
<svg class="a" style="left:63px;top:882px;" width="11" height="11" viewBox="0 0 11 11"><defs><radialGradient id="dot0" cx=".4" cy=".35" r=".7"><stop offset="0" stop-color="#ff6a6a"/><stop offset="1" stop-color="#d01010"/></radialGradient></defs><circle cx="5.5" cy="5.5" r="5.2" fill="url(#dot0)"/></svg>
<svg class="a" style="left:79px;top:882px;" width="11" height="11" viewBox="0 0 11 11"><defs><radialGradient id="dot1" cx=".4" cy=".35" r=".7"><stop offset="0" stop-color="#b8e890"/><stop offset="1" stop-color="#5aa83a"/></radialGradient></defs><circle cx="5.5" cy="5.5" r="5.2" fill="url(#dot1)"/></svg>
<svg class="a" style="left:95px;top:882px;" width="11" height="11" viewBox="0 0 11 11"><defs><radialGradient id="dot2" cx=".4" cy=".35" r=".7"><stop offset="0" stop-color="#a0c8f8"/><stop offset="1" stop-color="#3a88e0"/></radialGradient></defs><circle cx="5.5" cy="5.5" r="5.2" fill="url(#dot2)"/></svg>
<svg class="a" style="left:111px;top:882px;" width="11" height="11" viewBox="0 0 11 11"><defs><radialGradient id="dot3" cx=".4" cy=".35" r=".7"><stop offset="0" stop-color="#fff080"/><stop offset="1" stop-color="#f0c000"/></radialGradient></defs><circle cx="5.5" cy="5.5" r="5.2" fill="url(#dot3)"/></svg>
<svg class="a" style="left:127px;top:882px;" width="11" height="11" viewBox="0 0 11 11"><defs><radialGradient id="dot4" cx=".4" cy=".35" r=".7"><stop offset="0" stop-color="#ffb060"/><stop offset="1" stop-color="#e06a00"/></radialGradient></defs><circle cx="5.5" cy="5.5" r="5.2" fill="url(#dot4)"/></svg>
<svg class="a" style="left:143px;top:882px;" width="11" height="11" viewBox="0 0 11 11"><defs><radialGradient id="dot5" cx=".4" cy=".35" r=".7"><stop offset="0" stop-color="#f0a0f8"/><stop offset="1" stop-color="#b030c8"/></radialGradient></defs><circle cx="5.5" cy="5.5" r="5.2" fill="url(#dot5)"/></svg>
<div class="t" style="left:166px;top:882px;font-size:12px;color:#fff;letter-spacing:0.45px">июл-29 12:45,1.34470 O:1.34369 H:1.34391 L:1.34360 C:1.34383 V:1.2K</div>
<div class="t" style="left:1152px;top:882px;font-size:12px;color:#fff;letter-spacing:0.4px">Workspace: andreybbrv123</div>
<div class="t" style="left:1315px;top:882px;font-size:12px;color:#fff;font-weight:bold;letter-spacing:0.35px">июл-30 11:05:07</div>
<svg class="a" style="left:1424px;top:887px;" width="8" height="8" viewBox="0 0 8 8"><path d="M7 1V2M4 4V5M7 4V5M1 7V8M4 7V8M7 7V8" stroke="#9ac0e8"/></svg>
<div class="a" style="left:438px;top:238px;width:564px;height:424px;background:#eeeef2;border:2px solid #1a78d2;box-sizing:border-box"></div>
<svg class="a" style="left:443px;top:244px;" width="16" height="16" viewBox="0 0 16 16"><path d="M2 14L4 9L12 1Q14 0 15 2L15 3L7 11Z" fill="#f6d860" stroke="#c08020" stroke-width="1"/><path d="M2 14L4 9L7 11Z" fill="#f0c8a0"/><path d="M2 14L3 12L4 13Z" fill="#555"/></svg>
<div class="t" style="left:464px;top:246px;font-size:13px;color:#111;letter-spacing:-0.1px;font-size:13.5px">Elliott Wave Oscillator</div>
<svg class="a" style="left:982px;top:247px;" width="10" height="10" viewBox="0 0 10 10"><path d="M1 1L9 9M9 1L1 9" stroke="#111" stroke-width="1.6"/></svg>
<div class="t" style="left:451px;top:276px;font-size:12px;color:#111;letter-spacing:0.08px">This oscillator subtracts a 34 period simple moving average (SMA) from a 5 period SMA. It</div>
<div class="t" style="left:451px;top:292px;font-size:12px;color:#111;letter-spacing:0.08px">illustrates what's happening to the market driving force at the present moment.</div>
<div class="a" style="left:448px;top:320px;width:60px;height:23px;background:#0a74d4"></div>
<div class="a" style="left:448px;top:343px;width:544px;height:2px;background:#0a74d4"></div>
<div class="t" style="left:456px;top:327px;font-size:12px;color:#fff;letter-spacing:0.2px">General</div>
<div class="t" style="left:516px;top:327px;font-size:12px;color:#111;letter-spacing:0.2px">Options</div>
<div class="t" style="left:452px;top:351px;font-size:12px;color:#222;font-weight:bold;letter-spacing:-0.4px">Inputs</div>
<div class="a" style="left:451px;top:366px;width:531px;height:2px;background:#0a74d4"></div>
<div class="t" style="right:912px;top:383px;font-size:12px;color:#111;font-weight:bold;letter-spacing:-0.1px">Input:</div>
<div class="a" style="left:535px;top:377px;width:121px;height:23px;background:#fdfdfd;border:1px solid #dcdce0;box-sizing:border-box"></div>
<div class="t" style="left:540px;top:383px;font-size:12px;color:#111;letter-spacing:0.2px">Midpoint</div>
<svg class="a" style="left:643px;top:384px;" width="7" height="6" viewBox="0 0 7 6"><path d="M0 0H7L3.5 6Z" fill="#111"/></svg>
<div class="t" style="right:912px;top:411px;font-size:12px;color:#111;font-weight:bold;letter-spacing:-0.1px">Method:</div>
<div class="a" style="left:535px;top:405px;width:64px;height:23px;background:#fdfdfd;border:1px solid #dcdce0;box-sizing:border-box"></div>
<div class="t" style="left:540px;top:411px;font-size:12px;color:#111;">SMA</div>
<svg class="a" style="left:586px;top:412px;" width="7" height="6" viewBox="0 0 7 6"><path d="M0 0H7L3.5 6Z" fill="#111"/></svg>
<div class="t" style="right:912px;top:440px;font-size:12px;color:#111;font-weight:bold;letter-spacing:-0.1px">Slow Period:</div>
<div class="a" style="left:535px;top:434px;width:79px;height:24px;background:#fdfdfd;border:1px solid #dcdce0;box-sizing:border-box"></div>
<div class="t" style="right:847px;top:440px;font-size:12px;color:#111;letter-spacing:0.3px">34</div>
<svg class="a" style="left:601px;top:439px;" width="7" height="13" viewBox="0 0 7 13"><path d="M1 4.5L3.5 1L6 4.5Z M1 8.5L3.5 12L6 8.5Z" fill="#111"/></svg>
<div class="t" style="right:912px;top:470px;font-size:12px;color:#111;font-weight:bold;letter-spacing:-0.1px">Fast Period:</div>
<div class="a" style="left:535px;top:463px;width:79px;height:24px;background:#fdfdfd;border:1px solid #dcdce0;box-sizing:border-box"></div>
<div class="t" style="right:847px;top:470px;font-size:12px;color:#111;">5</div>
<svg class="a" style="left:601px;top:468px;" width="7" height="13" viewBox="0 0 7 13"><path d="M1 4.5L3.5 1L6 4.5Z M1 8.5L3.5 12L6 8.5Z" fill="#111"/></svg>
<div class="t" style="left:452px;top:500px;font-size:12px;color:#222;font-weight:bold;letter-spacing:-0.4px">Settings</div>
<div class="a" style="left:451px;top:515px;width:531px;height:2px;background:#0a74d4"></div>
<div class="t" style="right:915px;top:531px;font-size:12px;color:#111;font-weight:bold;letter-spacing:-0.1px">Up Color:</div>
<div class="a" style="left:533px;top:526px;width:86px;height:20px;background:linear-gradient(#fafafa,#e4e4e6);border:1px solid #8a8a8e;border-radius:3px;box-sizing:border-box"></div><div class="a" style="left:539px;top:530px;width:61px;height:12px;background:#008000"></div><svg class="a" style="left:605px;top:534px;" width="7" height="4" viewBox="0 0 7 4"><path d="M0 0H7L3.5 4Z" fill="#666"/></svg>
<div class="t" style="right:915px;top:557px;font-size:12px;color:#111;font-weight:bold;letter-spacing:-0.1px">Down Color:</div>
<div class="a" style="left:533px;top:552px;width:86px;height:20px;background:linear-gradient(#fafafa,#e4e4e6);border:1px solid #8a8a8e;border-radius:3px;box-sizing:border-box"></div><div class="a" style="left:539px;top:556px;width:61px;height:12px;background:#800000"></div><svg class="a" style="left:605px;top:560px;" width="7" height="4" viewBox="0 0 7 4"><path d="M0 0H7L3.5 4Z" fill="#666"/></svg>
<div class="t" style="right:915px;top:583px;font-size:12px;color:#111;font-weight:bold;letter-spacing:-0.1px">Indicator:</div>
<div class="a" style="left:533px;top:578px;width:86px;height:20px;background:linear-gradient(#fafafa,#e4e4e6);border:1px solid #8a8a8e;border-radius:3px;box-sizing:border-box"></div><div class="a" style="left:539px;top:582px;width:61px;height:12px;background:#ffffff"></div><svg class="a" style="left:605px;top:586px;" width="7" height="4" viewBox="0 0 7 4"><path d="M0 0H7L3.5 4Z" fill="#666"/></svg>
<div class="a" style="left:629px;top:578px;width:86px;height:20px;background:linear-gradient(#fafafa,#e4e4e6);border:1px solid #8a8a8e;border-radius:3px;box-sizing:border-box"></div><div class="a" style="left:635px;top:582px;width:61px;height:12px;background:#000000"></div><svg class="a" style="left:701px;top:586px;" width="7" height="4" viewBox="0 0 7 4"><path d="M0 0H7L3.5 4Z" fill="#666"/></svg>
<div class="a" style="left:722px;top:580px;width:16px;height:16px;background:#fff;border:2px solid #6a6a6e;box-sizing:border-box"></div>
<div class="t" style="left:744px;top:583px;font-size:12px;color:#111;letter-spacing:0.3px">Line</div>
<div class="a" style="left:773px;top:580px;width:16px;height:16px;background:#fff;border:2px solid #6a6a6e;box-sizing:border-box"></div>
<svg class="a" style="left:776px;top:583px;" width="11" height="11" viewBox="0 0 11 11"><path d="M1 5L4 9L9 0" stroke="#111" stroke-width="1.5" fill="none"/></svg>
<div class="t" style="left:795px;top:583px;font-size:12px;color:#111;letter-spacing:0.3px">Display</div>
<div class="a" style="left:566px;top:625px;width:62px;height:23px;background:linear-gradient(#fdfdfd,#e2e2e4);border:1px solid #8a8a8e;border-radius:3px;box-sizing:border-box"></div><div class="t" style="left:566px;width:62px;text-align:center;top:630px;font-size:12px;line-height:14px;color:#111;letter-spacing:0.3px">Create</div>
<div class="a" style="left:638px;top:625px;width:101px;height:23px;background:linear-gradient(#fdfdfd,#e2e2e4);border:1px solid #8a8a8e;border-radius:3px;box-sizing:border-box"></div><div class="t" style="left:638px;width:101px;text-align:center;top:630px;font-size:12px;line-height:14px;color:#111;letter-spacing:0.3px">Save Defaults</div>
<div class="a" style="left:749px;top:625px;width:51px;height:23px;background:linear-gradient(#fdfdfd,#e2e2e4);border:1px solid #8a8a8e;border-radius:3px;box-sizing:border-box"></div><div class="t" style="left:749px;width:51px;text-align:center;top:630px;font-size:12px;line-height:14px;color:#111;letter-spacing:0.3px">Help</div>
<div class="a" style="left:810px;top:625px;width:64px;height:23px;background:linear-gradient(#fdfdfd,#e2e2e4);border:1px solid #8a8a8e;border-radius:3px;box-sizing:border-box"></div><div class="t" style="left:810px;width:64px;text-align:center;top:630px;font-size:12px;line-height:14px;color:#111;letter-spacing:0.3px">Cancel</div>
<div class="a" style="left:0px;top:0px;width:1440px;height:2px;background:#b2b2b4"></div>
<div class="a" style="left:0px;top:0px;width:2px;height:900px;background:#b2b2b4"></div>
<div class="a" style="left:1438px;top:0px;width:2px;height:900px;background:#b2b2b4"></div>
<div class="a" style="left:0px;top:898px;width:1440px;height:2px;background:#b2b2b4"></div>
<svg class="a" style="left:4px;top:3px" width="22" height="22" viewBox="0 0 22 22"><defs><radialGradient id="lgG" cx="0.55" cy="0.55" r="0.6"><stop offset="0" stop-color="#f0f8e8"/><stop offset="0.6" stop-color="#b0e890"/><stop offset="1" stop-color="#50d030"/></radialGradient><linearGradient id="lgB" x1="0" y1="0" x2="0" y2="1"><stop offset="0" stop-color="#70b8e8"/><stop offset="1" stop-color="#3590d8"/></linearGradient></defs><path d="M2.5 12Q2.5 3 11 3Q19.5 3 20 11Q15 14 11 12Q6 10 2.5 12Z" fill="url(#lgG)"/><path d="M4 11.5Q8 10 11 13Q15 15 20 11Q20 20 11.5 20.5Q4 20.5 4 11.5Z" fill="url(#lgB)"/></svg>
<div class="t" style="left:578px;top:8px;font-size:13px;color:#4a4a4a;letter-spacing:-0.1px">MotiveWave - Console (simulated - IQFeed)</div>
<div class="t" style="left:1078px;top:7px;font-size:11px;color:#1a1a1a;font-weight:bold;font-style:italic;">WWW.TRADING-SOFTWARE-COLLECTION.COM</div>
<div class="a" style="left:1381px;top:15px;width:9px;height:3px;background:#111"></div>
<div class="a" style="left:1400px;top:9px;width:9px;height:9px;border:1px solid #111;border-top-width:2px;box-sizing:border-box"></div>
<svg class="a" style="left:1419px;top:9px" width="10" height="10"><path d="M1 1L9 9M9 1L1 9" stroke="#111" stroke-width="1.6"/></svg>
<div class="t" style="left:10px;top:30px;font-size:12px;color:#111;letter-spacing:0.15px">FILE</div>
<div class="t" style="left:51px;top:30px;font-size:12px;color:#111;letter-spacing:0.15px">EDIT</div>
<div class="t" style="left:94px;top:30px;font-size:12px;color:#111;letter-spacing:0.15px">VIEW</div>
<div class="t" style="left:139px;top:30px;font-size:12px;color:#111;letter-spacing:0.15px">STUDY</div>
<div class="t" style="left:196px;top:30px;font-size:12px;color:#111;letter-spacing:0.15px">STRATEGY</div>
<div class="t" style="left:275px;top:30px;font-size:12px;color:#111;letter-spacing:0.15px">FORMAT</div>
<div class="t" style="left:340px;top:30px;font-size:12px;color:#111;letter-spacing:0.15px">CONFIGURE</div>
<div class="t" style="left:428px;top:30px;font-size:12px;color:#111;letter-spacing:0.15px">WINDOW</div>
<div class="t" style="left:498px;top:30px;font-size:12px;color:#111;letter-spacing:0.15px">HELP</div>
</body></html>
